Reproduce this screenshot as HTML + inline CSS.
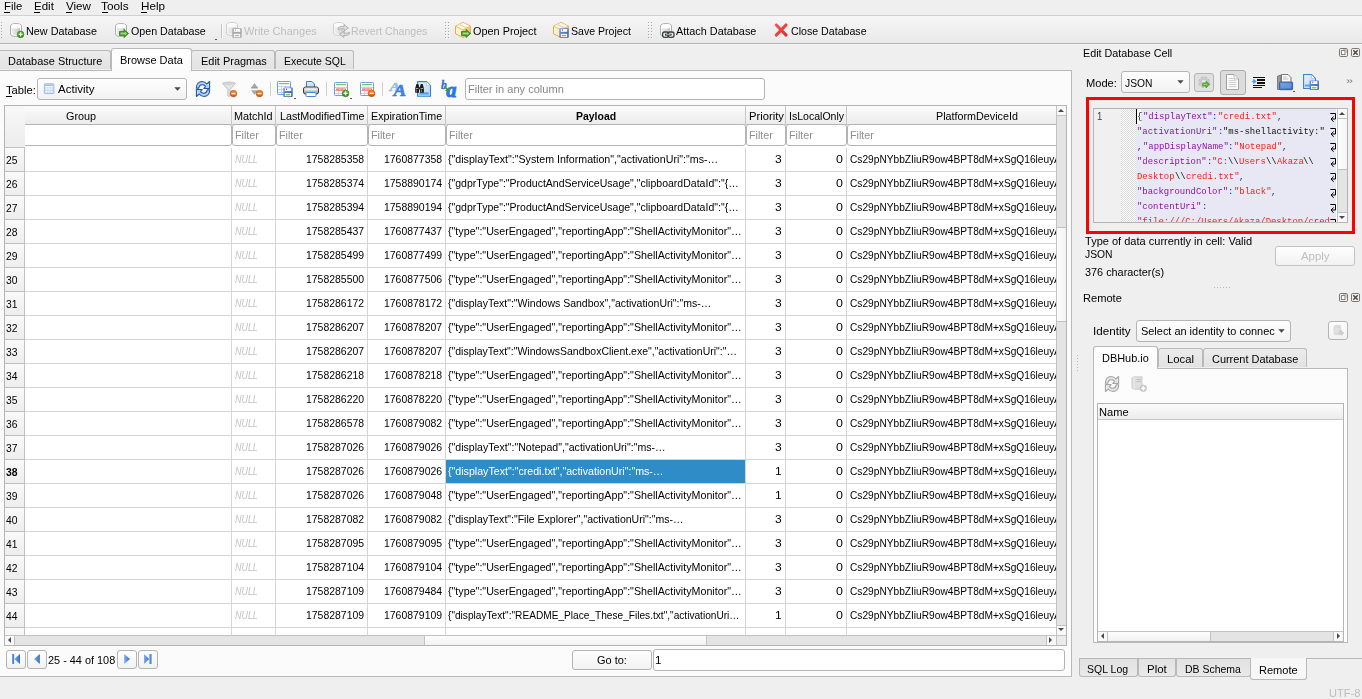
<!DOCTYPE html>
<html><head><meta charset="utf-8"><title>DB Browser for SQLite</title>
<style>
html,body{margin:0;padding:0}
body{width:1362px;height:699px;overflow:hidden;background:#efefef;position:relative;font-family:"Liberation Sans",sans-serif;font-size:11px;color:#000}
div,span.t,svg{position:absolute;box-sizing:border-box}
span.t{white-space:pre;line-height:16px;transform-origin:0 50%}
u{text-decoration:underline;text-underline-offset:2px;text-decoration-thickness:1px}
.btn{border:1px solid #b4b4b4;border-radius:3px;background:linear-gradient(#fefefe,#f2f2f2)}
.inp{border:1px solid #b4b4b4;border-radius:3px;background:#fff}
.hdr{background:linear-gradient(#fbfbfb,#ececec);border-right:1px solid #c6c6c6;border-bottom:1px solid #c6c6c6}
.tab{border:1px solid #b9b9b9;border-bottom:none;border-radius:3px 3px 0 0;background:linear-gradient(#ebebeb,#e2e2e2)}
.tabsel{border:1px solid #b9b9b9;border-bottom:none;border-radius:3px 3px 0 0;background:linear-gradient(#ffffff,#fbfbfb)}
.btab{border:1px solid #b9b9b9;border-top:none;border-radius:0 0 3px 3px;background:linear-gradient(#e1e1e1,#e9e9e9)}
.btabsel{border:1px solid #b9b9b9;border-top:none;border-radius:0 0 3px 3px;background:#f7f7f7}
.sep{background:#c4c4c4;width:1px}
#txt{left:0;top:0;width:1362px;height:699px;will-change:transform}

</style></head>
<body>
<svg width="0" height="0" style="left:0;top:0"><defs>
<linearGradient id="gCyl" x1="0" x2="1" y1="0" y2="0"><stop offset="0" stop-color="#ededed"/><stop offset=".5" stop-color="#dcdcdc"/><stop offset="1" stop-color="#c4c4c4"/></linearGradient>
<linearGradient id="gGreen" x1="0" x2="0" y1="0" y2="1"><stop offset="0" stop-color="#6db64a"/><stop offset="1" stop-color="#2f8a14"/></linearGradient>
<linearGradient id="gOrange" x1="0" x2="0" y1="0" y2="1"><stop offset="0" stop-color="#f89838"/><stop offset="1" stop-color="#d85000"/></linearGradient>
<linearGradient id="gBlue" x1="0" x2="1" y1="0" y2="1"><stop offset="0" stop-color="#6f9fe0"/><stop offset="1" stop-color="#2c5cab"/></linearGradient>
<linearGradient id="gRed" x1="0" x2="1" y1="0" y2="1"><stop offset="0" stop-color="#f86868"/><stop offset="1" stop-color="#e01818"/></linearGradient>
<linearGradient id="gPkgL" x1="0" x2="1" y1="0" y2="0"><stop offset="0" stop-color="#fff6d8"/><stop offset="1" stop-color="#f8dc98"/></linearGradient>
<linearGradient id="gPkgR" x1="0" x2="1" y1="0" y2="1"><stop offset="0" stop-color="#fbe3a0"/><stop offset="1" stop-color="#f0b040"/></linearGradient>
<linearGradient id="gNav" x1="0" x2="1" y1="0" y2="0"><stop offset="0" stop-color="#82b0f4"/><stop offset="1" stop-color="#2f6ad0"/></linearGradient>
<linearGradient id="gPrn" x1="0" x2="0" y1="0" y2="1"><stop offset="0" stop-color="#f4f4f4"/><stop offset="1" stop-color="#9a9a9a"/></linearGradient>
<linearGradient id="gPage" x1="0" x2="1" y1="0" y2="1"><stop offset="0" stop-color="#eaf3ff"/><stop offset="1" stop-color="#b8d4f8"/></linearGradient>
</defs></svg><div style="left:0px;top:0px;width:1362px;height:15px;background:#efefef"></div><div style="left:4px;top:12px;width:6px;height:1px;background:#000"></div><div style="left:34px;top:12px;width:6px;height:1px;background:#000"></div><div style="left:66px;top:12px;width:6px;height:1px;background:#000"></div><div style="left:102px;top:12px;width:6px;height:1px;background:#000"></div><div style="left:141px;top:12px;width:6px;height:1px;background:#000"></div><div style="left:0px;top:15px;width:1362px;height:1px;background:#d0d0d0"></div><div style="left:0px;top:16px;width:1362px;height:27px;background:linear-gradient(#f6f6f6,#e9e9e9)"></div><div style="left:0px;top:43px;width:1362px;height:1px;background:#b2b2b2"></div><div style="left:0px;top:44px;width:1362px;height:1px;background:#f6f6f6"></div><div style="left:1px;top:22px;width:1px;height:16px;background:repeating-linear-gradient(#a8a8a8 0 1px,transparent 1px 3px)"></div><div style="left:445px;top:22px;width:1px;height:16px;background:repeating-linear-gradient(#a8a8a8 0 1px,transparent 1px 3px)"></div><div style="left:446px;top:23px;width:1px;height:16px;background:repeating-linear-gradient(#fff 0 1px,transparent 1px 3px)"></div><div style="left:448px;top:22px;width:1px;height:16px;background:repeating-linear-gradient(#a8a8a8 0 1px,transparent 1px 3px)"></div><div style="left:449px;top:23px;width:1px;height:16px;background:repeating-linear-gradient(#fff 0 1px,transparent 1px 3px)"></div><div style="left:648px;top:22px;width:1px;height:16px;background:repeating-linear-gradient(#a8a8a8 0 1px,transparent 1px 3px)"></div><div style="left:649px;top:23px;width:1px;height:16px;background:repeating-linear-gradient(#fff 0 1px,transparent 1px 3px)"></div><div style="left:651px;top:22px;width:1px;height:16px;background:repeating-linear-gradient(#a8a8a8 0 1px,transparent 1px 3px)"></div><div style="left:652px;top:23px;width:1px;height:16px;background:repeating-linear-gradient(#fff 0 1px,transparent 1px 3px)"></div><div style="left:221px;top:24px;width:1px;height:14px;background:#c4c4c4"></div><div style="left:222px;top:24px;width:1px;height:14px;background:#fbfbfb"></div><div style="left:215px;top:39px;width:2px;height:1px;background:#555"></div><svg style="left:9px;top:22px;overflow:visible" width="16" height="16" viewBox="0 0 16 16"><g transform="translate(1 1)" opacity="1"><path d="M.5 3C.5 -.3 11.5 -.3 11.5 3V11C11.5 14.3 .5 14.3 .5 11Z" fill="#fbfbfb" stroke="#b0b0b0"/><path d="M1.9 4.6C3.5 6 8.5 6 10.1 4.6V10.6C8.5 12.4 3.5 12.4 1.9 10.6Z" fill="url(#gCyl)"/><ellipse cx="6" cy="3" rx="4.6" ry="1.9" fill="#fff"/></g><circle cx="11.6" cy="12.4" r="3.3" fill="url(#gGreen)" stroke="#2c7a12" stroke-width=".6"/><path d="M9.6 12.4h4" stroke="#fff" stroke-width="1.3"/><path d="M11.6 10.4v4" stroke="#fff" stroke-width="1.3"/></svg><svg style="left:114px;top:22px;overflow:visible" width="16" height="16" viewBox="0 0 16 16"><g transform="translate(1 1)" opacity="1"><path d="M.5 3C.5 -.3 11.5 -.3 11.5 3V11C11.5 14.3 .5 14.3 .5 11Z" fill="#fbfbfb" stroke="#b0b0b0"/><path d="M1.9 4.6C3.5 6 8.5 6 10.1 4.6V10.6C8.5 12.4 3.5 12.4 1.9 10.6Z" fill="url(#gCyl)"/><ellipse cx="6" cy="3" rx="4.6" ry="1.9" fill="#fff"/></g><path transform="translate(5 7)" d="M.5 2.5H5V.4L9.6 4.5L5 8.6V6.5H.5Z" fill="#3b9a1e" stroke="#2a8410" stroke-width=".8" stroke-linejoin="round"/><path transform="translate(5 7)" d="M1.5 3.5H6V2.5L8.1 4.5L6 6.5V5.5H1.5Z" fill="#9ed488"/></svg><svg style="left:226px;top:22px;overflow:visible" width="16" height="16" viewBox="0 0 16 16"><g opacity=".75"><g transform="translate(0 0)" opacity="1"><path d="M.5 3C.5 -.3 11.5 -.3 11.5 3V11C11.5 14.3 .5 14.3 .5 11Z" fill="#fbfbfb" stroke="#c4c4c4"/><path d="M1.9 4.6C3.5 6 8.5 6 10.1 4.6V10.6C8.5 12.4 3.5 12.4 1.9 10.6Z" fill="url(#gCyl)"/><ellipse cx="6" cy="3" rx="4.6" ry="1.9" fill="#fff"/></g></g><g transform="translate(6 6)"><rect x=".3" y=".3" width="9.4" height="9.4" rx=".8" fill="#a8a8a8"/><rect x="1.8" y="1" width="6.4" height="2.8" fill="#fff"/><rect x="3" y="1.4" width="1" height="1.4" fill="#a4a4a4"/><rect x="1.8" y="5.8" width="6.4" height="3.2" fill="#fff"/><rect x="2.8" y="6.9" width="4.4" height="1.3" fill="#b0b0b0"/></g></svg><svg style="left:333px;top:22px;overflow:visible" width="16" height="16" viewBox="0 0 16 16"><g opacity=".75"><g transform="translate(0 0)" opacity="1"><path d="M.5 3C.5 -.3 11.5 -.3 11.5 3V11C11.5 14.3 .5 14.3 .5 11Z" fill="#fbfbfb" stroke="#c4c4c4"/><path d="M1.9 4.6C3.5 6 8.5 6 10.1 4.6V10.6C8.5 12.4 3.5 12.4 1.9 10.6Z" fill="url(#gCyl)"/><ellipse cx="6" cy="3" rx="4.6" ry="1.9" fill="#fff"/></g></g><path d="M5.4 5.4C7.4 4.2 9.4 4.1 11 4.6V2.4L15.4 6L11 8.8V7C9.4 6.5 7.4 6.6 5.4 7.8Z" fill="#dcdcdc" stroke="#a4a4a4" stroke-width=".8" stroke-linejoin="round"/><path d="M16.4 12.2C14.4 13.6 12.4 13.7 10.9 13.2V15.6L6.4 12L10.9 9.2V11C12.4 11.5 14.4 11.4 16.4 10.2Z" fill="#dcdcdc" stroke="#a4a4a4" stroke-width=".8" stroke-linejoin="round"/></svg><svg style="left:455px;top:22px;overflow:visible" width="16" height="16" viewBox="0 0 16 16"><path d="M8 .5L15.5 4.2V11.8L8 15.5L.5 11.8V4.2Z" fill="url(#gPkgL)" stroke="#dfae4c" stroke-width="1" stroke-linejoin="round"/><path d="M8 7.8L15.2 4.4V11.6L8 15.2Z" fill="url(#gPkgR)"/><path d="M8 .8L15 4.2L8 7.6L1 4.2Z" fill="#fffaf0"/><path d="M.8 4.3L8 7.8L15.2 4.3M8 7.8V15.2" fill="none" stroke="#e6bc68" stroke-width=".9"/><path d="M4.5 2.5L11.5 6" stroke="#f0d090" stroke-width="1.2"/><path transform="translate(6 7)" d="M.5 2.5H5V.4L9.6 4.5L5 8.6V6.5H.5Z" fill="#3b9a1e" stroke="#2a8410" stroke-width=".8" stroke-linejoin="round"/><path transform="translate(6 7)" d="M1.5 3.5H6V2.5L8.1 4.5L6 6.5V5.5H1.5Z" fill="#9ed488"/></svg><svg style="left:553px;top:22px;overflow:visible" width="16" height="16" viewBox="0 0 16 16"><path d="M8 .5L15.5 4.2V11.8L8 15.5L.5 11.8V4.2Z" fill="url(#gPkgL)" stroke="#dfae4c" stroke-width="1" stroke-linejoin="round"/><path d="M8 7.8L15.2 4.4V11.6L8 15.2Z" fill="url(#gPkgR)"/><path d="M8 .8L15 4.2L8 7.6L1 4.2Z" fill="#fffaf0"/><path d="M.8 4.3L8 7.8L15.2 4.3M8 7.8V15.2" fill="none" stroke="#e6bc68" stroke-width=".9"/><path d="M4.5 2.5L11.5 6" stroke="#f0d090" stroke-width="1.2"/><g transform="translate(6 6)"><rect x=".3" y=".3" width="9.4" height="9.4" rx=".8" fill="url(#gBlue)"/><rect x="1.8" y="1" width="6.4" height="2.8" fill="#fff"/><rect x="3" y="1.4" width="1" height="1.4" fill="#3a6cc0"/><rect x="1.8" y="5.8" width="6.4" height="3.2" fill="#fff"/><rect x="2.8" y="6.9" width="4.4" height="1.3" fill="#78c030"/></g></svg><svg style="left:659px;top:22px;overflow:visible" width="16" height="16" viewBox="0 0 16 16"><g transform="translate(1 1)" opacity="1"><path d="M.5 3C.5 -.3 11.5 -.3 11.5 3V11C11.5 14.3 .5 14.3 .5 11Z" fill="#fbfbfb" stroke="#b0b0b0"/><path d="M1.9 4.6C3.5 6 8.5 6 10.1 4.6V10.6C8.5 12.4 3.5 12.4 1.9 10.6Z" fill="url(#gCyl)"/><ellipse cx="6" cy="3" rx="4.6" ry="1.9" fill="#fff"/></g><rect x="3.6" y="10" width="6" height="5.3" rx="2" fill="#e8eef0" stroke="#3c3c3c" stroke-width="1.3"/><rect x="9" y="10" width="6" height="5.3" rx="2" fill="#e8eef0" stroke="#3c3c3c" stroke-width="1.3"/><rect x="6" y="11.7" width="6.6" height="1.9" fill="#2c2c2c"/><rect x="7" y="12.3" width="4.6" height=".7" fill="#d8d8d8"/></svg><svg style="left:773px;top:22px;overflow:visible" width="16" height="16" viewBox="0 0 16 16"><path d="M3.3 3L13 13M13 3L3.3 13" stroke="url(#gRed)" stroke-width="3.1" stroke-linecap="round"/><path d="M3.3 3L13 13M13 3L3.3 13" stroke="#f23c3c" stroke-width="2.2" stroke-linecap="round" opacity=".55"/></svg><div style="left:0px;top:70px;width:1072px;height:607px;background:#fbfbfb;border:1px solid #b9b9b9;border-left:none"></div><div class="tab" style="border-left:none;border-radius:0 3px 0 0;left:0px;top:50px;width:111px;height:19px;"></div><div class="tab" style="left:191px;top:50px;width:84px;height:19px;"></div><div class="tab" style="left:275px;top:50px;width:79px;height:19px;"></div><div class="tabsel" style="left:111px;top:48px;width:81px;height:23px;"></div><div style="left:6px;top:96px;width:6px;height:1px;background:#000"></div><div class="btn" style="left:37px;top:78px;width:150px;height:22px;"></div><svg style="left:43px;top:81px;overflow:visible" width="16" height="16" viewBox="0 0 16 16"><rect x="1.3" y="2.8" width="9.6" height="9.8" rx=".8" fill="#cddcf6" stroke="#9dbaea" stroke-width="1"/><rect x="2.3" y="3.9" width="7.6" height=".9" fill="#8ccf7c"/><rect x="2.3" y="5" width="7.6" height="1.3" fill="#eef4fd"/><path d="M2.6 8H4.4M5.2 8H7M7.8 8H9.6M2.6 10.8H4.4M5.2 10.8H7M7.8 10.8H9.6" stroke="#fff" stroke-width="1"/></svg><svg style="left:174px;top:87px" width="7" height="4" viewBox="0 0 7 4"><path d="M.3 .3h6.4L3.5 3.7z" fill="#4a4a4a"/></svg><svg style="left:195px;top:81px;overflow:visible" width="16" height="16" viewBox="0 0 16 16"><g transform="translate(1 0)"><g><path d="M.3 7.3C.3 3 2.8 .5 6 .5C8 .5 9.6 1.4 10.8 3L13.6 .5V7.5H7.8L9.6 5.6C8.8 4.4 7.6 3.8 6.2 3.8C4.4 3.8 3.2 5 2.7 7.3Z" fill="#8fb6e8" stroke="#2458a6" stroke-width="1.1" stroke-linejoin="round"/><path d="M1.6 5.6C2.4 3.2 4 2.1 6.1 2.1C8 2.1 9.6 3 10.6 4.6L12.4 3V6.2H9.6" fill="none" stroke="#e4effc" stroke-width=".9" opacity=".9"/><g transform="rotate(180 7 8)"><path d="M.3 7.3C.3 3 2.8 .5 6 .5C8 .5 9.6 1.4 10.8 3L13.6 .5V7.5H7.8L9.6 5.6C8.8 4.4 7.6 3.8 6.2 3.8C4.4 3.8 3.2 5 2.7 7.3Z" fill="#8fb6e8" stroke="#2458a6" stroke-width="1.1" stroke-linejoin="round"/><path d="M1.6 5.6C2.4 3.2 4 2.1 6.1 2.1C8 2.1 9.6 3 10.6 4.6L12.4 3V6.2H9.6" fill="none" stroke="#e4effc" stroke-width=".9" opacity=".9"/></g></g></g></svg><svg style="left:222px;top:81px;overflow:visible" width="16" height="16" viewBox="0 0 16 16"><path d="M.6 2.6C.6 .6 13.4 .6 13.4 2.6L8.2 8.4V14.6C8.2 15.6 5.8 15.6 5.8 14.6V8.4Z" fill="#e4e4e4" stroke="#b6b6b6" stroke-width=".8"/><ellipse cx="7" cy="2.6" rx="5.6" ry="1.3" fill="#d2d2d2"/><circle cx="11.5" cy="12.6" r="3.3" fill="url(#gOrange)" stroke="#c04800" stroke-width=".6"/><path d="M9.5 12.6h4" stroke="#fff" stroke-width="1.3"/></svg><svg style="left:249px;top:81px;overflow:visible" width="16" height="16" viewBox="0 0 16 16"><path d="M2 7H9L5.5 2Z" fill="#a8a8a8"/><path d="M2 9.2H9L5.5 14Z" fill="#a8a8a8"/><path d="M2 7H9" stroke="#888" stroke-width=".8"/><circle cx="10.5" cy="12.6" r="3.3" fill="url(#gOrange)" stroke="#c04800" stroke-width=".6"/><path d="M8.5 12.6h4" stroke="#fff" stroke-width="1.3"/></svg><svg style="left:277px;top:81px;overflow:visible" width="16" height="16" viewBox="0 0 16 16"><g transform="translate(0 0)"><rect x=".5" y=".5" width="13" height="13" rx=".8" fill="#fff" stroke="#6f9fdf"/><rect x="2" y="2" width="10" height="1.2" fill="#78c070"/><path d="M1 5.5H13M1 8.5H13M1 11.5H13M4.5 4.5V13M8.5 4.5V13" stroke="#b8d0f0" stroke-width=".9" fill="none"/></g><g transform="translate(6 6.2)"><rect x=".3" y=".3" width="9.4" height="9.4" rx=".8" fill="url(#gBlue)"/><rect x="1.8" y="1" width="6.4" height="2.8" fill="#fff"/><rect x="3" y="1.4" width="1" height="1.4" fill="#3a6cc0"/><rect x="1.8" y="5.8" width="6.4" height="3.2" fill="#fff"/><rect x="2.8" y="6.9" width="4.4" height="1.3" fill="#78c030"/></g></svg><svg style="left:303px;top:81px;overflow:visible" width="16" height="16" viewBox="0 0 16 16"><path d="M3.5 6.5V.5H9L11.5 3V6.5Z" fill="url(#gPage)" stroke="#3f7fd0" stroke-width="1"/><rect x=".5" y="6" width="15" height="7" rx="2" fill="url(#gPrn)" stroke="#3a3a3a" stroke-width="1"/><rect x="2.5" y="7.5" width="11" height="2" rx="1" fill="#e8e8e8"/><rect x="3" y="11.5" width="10" height="4" rx=".8" fill="#fff" stroke="#4a86d4" stroke-width="1"/></svg><svg style="left:334px;top:81px;overflow:visible" width="16" height="16" viewBox="0 0 16 16"><g transform="translate(0 1)"><rect x=".5" y=".5" width="13" height="13" rx=".8" fill="#fff" stroke="#6f9fdf"/><rect x="2" y="2" width="10" height="1.2" fill="#78c070"/><path d="M1 5.5H13M1 8.5H13M1 11.5H13M4.5 4.5V13M8.5 4.5V13" stroke="#b8d0f0" stroke-width=".9" fill="none"/><rect x="2" y="6.3" width="10" height="2.6" fill="#ff8888"/><path d="M5 7.6h2M9 7.6h2" stroke="#ffc8c8" stroke-width=".8"/></g><circle cx="11.6" cy="12.4" r="3.3" fill="url(#gGreen)" stroke="#2c7a12" stroke-width=".6"/><path d="M9.6 12.4h4" stroke="#fff" stroke-width="1.3"/><path d="M11.6 10.4v4" stroke="#fff" stroke-width="1.3"/></svg><svg style="left:360px;top:81px;overflow:visible" width="16" height="16" viewBox="0 0 16 16"><g transform="translate(0 1)"><rect x=".5" y=".5" width="13" height="13" rx=".8" fill="#fff" stroke="#6f9fdf"/><rect x="2" y="2" width="10" height="1.2" fill="#78c070"/><path d="M1 5.5H13M1 8.5H13M1 11.5H13M4.5 4.5V13M8.5 4.5V13" stroke="#b8d0f0" stroke-width=".9" fill="none"/><rect x="2" y="6.3" width="10" height="2.6" fill="#ff8888"/><path d="M5 7.6h2M9 7.6h2" stroke="#ffc8c8" stroke-width=".8"/></g><circle cx="11.6" cy="12.4" r="3.3" fill="url(#gOrange)" stroke="#c04800" stroke-width=".6"/><path d="M9.6 12.4h4" stroke="#fff" stroke-width="1.3"/></svg><svg style="left:389px;top:81px;overflow:visible" width="16" height="16" viewBox="0 0 16 16"><g transform="translate(.5 9.8) scale(1.2 1)"><text x="0" y="0" font-family="Liberation Serif,serif" font-weight="bold" font-style="italic" font-size="13.2" fill="#8cc0f2" stroke="#8cc0f2" stroke-width=".5">A</text></g><g transform="translate(4.5 15.1) scale(1.12 1)"><text x="0" y="0" font-family="Liberation Serif,serif" font-weight="bold" font-style="italic" font-size="17" fill="#3f7fe4" stroke="#3f7fe4" stroke-width=".6">A</text></g></svg><svg style="left:415px;top:81px;overflow:visible" width="16" height="16" viewBox="0 0 16 16"><path d="M2.6 .6H11.5L15.5 4.6V15.2H2.6Z" fill="url(#gPage)" stroke="#3f7fd0" stroke-width="1.1" stroke-linejoin="round"/><path d="M11.5 .8V4.6H15.2" fill="#fff" stroke="#9cc0f0" stroke-width=".7"/><rect x="4.2" y="11.3" width="9.5" height="2.3" fill="#48a8f0"/><path d="M.2 11.8V7.2L1.4 3H3.4L4.2 6.3H4.9L5.7 3H7.7L8.9 7.2V11.8H5.1V8.6H4V11.8Z" fill="#1c1c1c"/><rect x=".8" y="7.2" width="2.6" height=".8" fill="#ccc"/><rect x="5.6" y="7.2" width="2.6" height=".8" fill="#ccc"/><rect x="1.2" y="8.6" width=".8" height="2.4" fill="#888"/><rect x="6" y="8.6" width=".8" height="2.4" fill="#888"/></svg><svg style="left:441px;top:81px;overflow:visible" width="16" height="16" viewBox="0 0 16 16"><text x="0" y="7.9" font-family="Liberation Serif,serif" font-weight="bold" font-style="italic" font-size="11.6" fill="#2f70e0" stroke="#2f70e0" stroke-width=".3">b</text><text x="5.2" y="15.6" font-family="Liberation Serif,serif" font-weight="bold" font-style="italic" font-size="20.5" fill="#2f74e4" stroke="#2f74e4" stroke-width=".8">a</text><path d="M4 4.8L6.6 7.4L8 6V10H4L5.4 8.6L2.8 6Z" fill="#3c9a2c"/></svg><div style="left:270px;top:82px;width:1px;height:14px;background:#cfcfcf"></div><div style="left:326px;top:82px;width:1px;height:14px;background:#cfcfcf"></div><div style="left:382px;top:82px;width:1px;height:14px;background:#cfcfcf"></div><div style="left:294px;top:98px;width:2px;height:1px;background:#555"></div><div style="left:350px;top:98px;width:2px;height:1px;background:#555"></div><div class="inp" style="left:465px;top:78px;width:300px;height:22px;"></div><div style="left:4px;top:105px;width:1063px;height:541px;background:#fff;border:1px solid #b4b4b4"></div><div style="left:5px;top:106px;width:1051px;height:529px;overflow:hidden"><div class="hdr" style="left:-72px;top:0px;width:299px;height:19px;"></div><div style="left:-72px;top:18px;width:299px;height:22px;background:#fff;border:1px solid #b4b4b4;border-radius:3px"></div><div class="hdr" style="left:227px;top:0px;width:44px;height:19px;"></div><div style="left:227px;top:18px;width:44px;height:22px;background:#fff;border:1px solid #b4b4b4;border-radius:3px"></div><div class="hdr" style="left:271px;top:0px;width:92px;height:19px;"></div><div style="left:271px;top:18px;width:92px;height:22px;background:#fff;border:1px solid #b4b4b4;border-radius:3px"></div><div class="hdr" style="left:363px;top:0px;width:78px;height:19px;"></div><div style="left:363px;top:18px;width:78px;height:22px;background:#fff;border:1px solid #b4b4b4;border-radius:3px"></div><div class="hdr" style="left:441px;top:0px;width:300px;height:19px;"></div><div style="left:441px;top:18px;width:300px;height:22px;background:#fff;border:1px solid #b4b4b4;border-radius:3px"></div><div class="hdr" style="left:741px;top:0px;width:40px;height:19px;"></div><div style="left:741px;top:18px;width:40px;height:22px;background:#fff;border:1px solid #b4b4b4;border-radius:3px"></div><div class="hdr" style="left:781px;top:0px;width:61px;height:19px;"></div><div style="left:781px;top:18px;width:61px;height:22px;background:#fff;border:1px solid #b4b4b4;border-radius:3px"></div><div class="hdr" style="left:842px;top:0px;width:261px;height:19px;"></div><div style="left:842px;top:18px;width:261px;height:22px;background:#fff;border:1px solid #b4b4b4;border-radius:3px"></div><div style="left:0px;top:0px;width:20px;height:41px;background:linear-gradient(#f8f8f8,#ececec)"></div><div style="left:0px;top:41px;width:20px;height:1px;background:#c0c0c0"></div><div style="left:226px;top:42px;width:1px;height:487px;background:#d4d4d4"></div><div style="left:270px;top:42px;width:1px;height:487px;background:#d4d4d4"></div><div style="left:362px;top:42px;width:1px;height:487px;background:#d4d4d4"></div><div style="left:440px;top:42px;width:1px;height:487px;background:#d4d4d4"></div><div style="left:740px;top:42px;width:1px;height:487px;background:#d4d4d4"></div><div style="left:780px;top:42px;width:1px;height:487px;background:#d4d4d4"></div><div style="left:841px;top:42px;width:1px;height:487px;background:#d4d4d4"></div><div style="left:0px;top:42px;width:20px;height:24px;background:linear-gradient(#f9f9f9,#ededed);border-right:1px solid #c0c0c0;border-bottom:1px solid #c0c0c0"></div><div style="left:20px;top:65px;width:1031px;height:1px;background:#d4d4d4"></div><div style="left:0px;top:66px;width:20px;height:24px;background:linear-gradient(#f9f9f9,#ededed);border-right:1px solid #c0c0c0;border-bottom:1px solid #c0c0c0"></div><div style="left:20px;top:89px;width:1031px;height:1px;background:#d4d4d4"></div><div style="left:0px;top:90px;width:20px;height:24px;background:linear-gradient(#f9f9f9,#ededed);border-right:1px solid #c0c0c0;border-bottom:1px solid #c0c0c0"></div><div style="left:20px;top:113px;width:1031px;height:1px;background:#d4d4d4"></div><div style="left:0px;top:114px;width:20px;height:24px;background:linear-gradient(#f9f9f9,#ededed);border-right:1px solid #c0c0c0;border-bottom:1px solid #c0c0c0"></div><div style="left:20px;top:137px;width:1031px;height:1px;background:#d4d4d4"></div><div style="left:0px;top:138px;width:20px;height:24px;background:linear-gradient(#f9f9f9,#ededed);border-right:1px solid #c0c0c0;border-bottom:1px solid #c0c0c0"></div><div style="left:20px;top:161px;width:1031px;height:1px;background:#d4d4d4"></div><div style="left:0px;top:162px;width:20px;height:24px;background:linear-gradient(#f9f9f9,#ededed);border-right:1px solid #c0c0c0;border-bottom:1px solid #c0c0c0"></div><div style="left:20px;top:185px;width:1031px;height:1px;background:#d4d4d4"></div><div style="left:0px;top:186px;width:20px;height:24px;background:linear-gradient(#f9f9f9,#ededed);border-right:1px solid #c0c0c0;border-bottom:1px solid #c0c0c0"></div><div style="left:20px;top:209px;width:1031px;height:1px;background:#d4d4d4"></div><div style="left:0px;top:210px;width:20px;height:24px;background:linear-gradient(#f9f9f9,#ededed);border-right:1px solid #c0c0c0;border-bottom:1px solid #c0c0c0"></div><div style="left:20px;top:233px;width:1031px;height:1px;background:#d4d4d4"></div><div style="left:0px;top:234px;width:20px;height:24px;background:linear-gradient(#f9f9f9,#ededed);border-right:1px solid #c0c0c0;border-bottom:1px solid #c0c0c0"></div><div style="left:20px;top:257px;width:1031px;height:1px;background:#d4d4d4"></div><div style="left:0px;top:258px;width:20px;height:24px;background:linear-gradient(#f9f9f9,#ededed);border-right:1px solid #c0c0c0;border-bottom:1px solid #c0c0c0"></div><div style="left:20px;top:281px;width:1031px;height:1px;background:#d4d4d4"></div><div style="left:0px;top:282px;width:20px;height:24px;background:linear-gradient(#f9f9f9,#ededed);border-right:1px solid #c0c0c0;border-bottom:1px solid #c0c0c0"></div><div style="left:20px;top:305px;width:1031px;height:1px;background:#d4d4d4"></div><div style="left:0px;top:306px;width:20px;height:24px;background:linear-gradient(#f9f9f9,#ededed);border-right:1px solid #c0c0c0;border-bottom:1px solid #c0c0c0"></div><div style="left:20px;top:329px;width:1031px;height:1px;background:#d4d4d4"></div><div style="left:0px;top:330px;width:20px;height:24px;background:linear-gradient(#f9f9f9,#ededed);border-right:1px solid #c0c0c0;border-bottom:1px solid #c0c0c0"></div><div style="left:20px;top:353px;width:1031px;height:1px;background:#d4d4d4"></div><div style="left:0px;top:354px;width:20px;height:24px;background:linear-gradient(#f9f9f9,#ededed);border-right:1px solid #c0c0c0;border-bottom:1px solid #c0c0c0"></div><div style="left:20px;top:377px;width:1031px;height:1px;background:#d4d4d4"></div><div style="left:441px;top:354px;width:299px;height:23px;background:#308cc6"></div><div style="left:0px;top:378px;width:20px;height:24px;background:linear-gradient(#f9f9f9,#ededed);border-right:1px solid #c0c0c0;border-bottom:1px solid #c0c0c0"></div><div style="left:20px;top:401px;width:1031px;height:1px;background:#d4d4d4"></div><div style="left:0px;top:402px;width:20px;height:24px;background:linear-gradient(#f9f9f9,#ededed);border-right:1px solid #c0c0c0;border-bottom:1px solid #c0c0c0"></div><div style="left:20px;top:425px;width:1031px;height:1px;background:#d4d4d4"></div><div style="left:0px;top:426px;width:20px;height:24px;background:linear-gradient(#f9f9f9,#ededed);border-right:1px solid #c0c0c0;border-bottom:1px solid #c0c0c0"></div><div style="left:20px;top:449px;width:1031px;height:1px;background:#d4d4d4"></div><div style="left:0px;top:450px;width:20px;height:24px;background:linear-gradient(#f9f9f9,#ededed);border-right:1px solid #c0c0c0;border-bottom:1px solid #c0c0c0"></div><div style="left:20px;top:473px;width:1031px;height:1px;background:#d4d4d4"></div><div style="left:0px;top:474px;width:20px;height:24px;background:linear-gradient(#f9f9f9,#ededed);border-right:1px solid #c0c0c0;border-bottom:1px solid #c0c0c0"></div><div style="left:20px;top:497px;width:1031px;height:1px;background:#d4d4d4"></div><div style="left:0px;top:498px;width:20px;height:24px;background:linear-gradient(#f9f9f9,#ededed);border-right:1px solid #c0c0c0;border-bottom:1px solid #c0c0c0"></div><div style="left:20px;top:521px;width:1031px;height:1px;background:#d4d4d4"></div><div style="left:0px;top:522px;width:20px;height:24px;background:linear-gradient(#f9f9f9,#ededed);border-right:1px solid #c0c0c0;border-bottom:1px solid #c0c0c0"></div></div><div style="left:1056px;top:106px;width:10px;height:529px;background:#e4e4e4;border-left:1px solid #c2c2c2"></div><div style="left:1056px;top:106px;width:10px;height:10px;background:#f8f8f8;border-left:1px solid #c2c2c2;border-bottom:1px solid #c2c2c2"></div><svg style="left:1058px;top:109px" width="6" height="3" viewBox="0 0 6 3"><path d="M0 3h6L3 0z" fill="#4a4a4a"/></svg><div style="left:1056px;top:625px;width:10px;height:10px;background:#f8f8f8;border-left:1px solid #c2c2c2;border-top:1px solid #c2c2c2"></div><svg style="left:1058px;top:628.4px" width="6" height="3" viewBox="0 0 6 3"><path d="M0 0h6L3 3z" fill="#4a4a4a"/></svg><div style="left:1056px;top:227px;width:10px;height:95px;background:linear-gradient(90deg,#fdfdfd,#f2f2f2);border:1px solid #c2c2c2;border-right:none"></div><div style="left:5px;top:635px;width:1051px;height:10px;background:#e4e4e4;border-top:1px solid #c2c2c2"></div><div style="left:5px;top:635px;width:10px;height:10px;background:#f8f8f8;border-top:1px solid #c2c2c2;border-right:1px solid #c2c2c2"></div><svg style="left:8px;top:637.4px" width="3" height="6" viewBox="0 0 3 6"><path d="M3 0v6L0 3z" fill="#4a4a4a"/></svg><div style="left:1046px;top:635px;width:10px;height:10px;background:#f8f8f8;border-top:1px solid #c2c2c2;border-left:1px solid #c2c2c2"></div><svg style="left:1049px;top:637.4px" width="3" height="6" viewBox="0 0 3 6"><path d="M0 0v6L3 3z" fill="#4a4a4a"/></svg><div style="left:424px;top:635px;width:283px;height:10px;background:linear-gradient(#fdfdfd,#f2f2f2);border:1px solid #c2c2c2;border-bottom:none"></div><div style="left:1056px;top:635px;width:10px;height:10px;background:#ebebeb;border-left:1px solid #c2c2c2;border-top:1px solid #c2c2c2"></div><div class="btn" style="left:6px;top:650px;width:20px;height:19px;"></div><svg style="left:8px;top:651.1px;overflow:visible" width="16" height="16" viewBox="0 0 16 16"><rect x="4" y="3" width="2.1" height="10" fill="url(#gNav)"/><path d="M12 3V13L6.2 8Z" fill="url(#gNav)"/></svg><div class="btn" style="left:27px;top:650px;width:20px;height:19px;"></div><svg style="left:29px;top:651.1px;overflow:visible" width="16" height="16" viewBox="0 0 16 16"><path d="M10.8 3V13L5 8Z" fill="url(#gNav)"/></svg><div class="btn" style="left:117px;top:650px;width:20px;height:19px;"></div><svg style="left:119px;top:651.1px;overflow:visible" width="16" height="16" viewBox="0 0 16 16"><path d="M5.2 3V13L11 8Z" fill="url(#gNav)"/></svg><div class="btn" style="left:138px;top:650px;width:20px;height:19px;"></div><svg style="left:140px;top:651.1px;overflow:visible" width="16" height="16" viewBox="0 0 16 16"><rect x="9.2" y="3" width="2.3" height="10" fill="url(#gNav)"/><path d="M4 3V13L9.2 8Z" fill="url(#gNav)"/></svg><div class="btn" style="left:572px;top:650px;width:80px;height:20px;"></div><div class="inp" style="left:653px;top:649px;width:412px;height:22px;"></div><svg style="left:1339px;top:48px" width="22" height="9" viewBox="0 0 22 9"><rect x=".5" y=".5" width="8" height="8" rx="1.3" fill="#f4f4f4" stroke="#7a7672"/><rect x="2.4" y="2.6" width="3.6" height="4" fill="#fff" stroke="#7a7672" stroke-width=".9"/><path d="M4 1.6H7.2V5" fill="none" stroke="#aaa" stroke-width=".8"/><rect x="12.5" y=".5" width="8" height="8" rx="1.3" fill="#f4f4f4" stroke="#7a7672"/><path d="M14.3 2.3L18.7 6.7M18.7 2.3L14.3 6.7" stroke="#4a4a4a" stroke-width="1.5"/></svg><div class="btn" style="left:1121px;top:71px;width:69px;height:22px;"></div><svg style="left:1177px;top:80px" width="7" height="4" viewBox="0 0 7 4"><path d="M.3 .3h6.4L3.5 3.7z" fill="#4a4a4a"/></svg><div style="left:1194px;top:73px;width:20px;height:19px;border:1px solid #b4b4b4;border-radius:3px;background:#e0e0e0"></div><svg style="left:1196px;top:74px;overflow:visible" width="16" height="16" viewBox="0 0 16 16"><g><circle cx="8" cy="8" r="4.2" fill="none" stroke="#c0c0c0" stroke-width="3.2" stroke-dasharray="2.2 1.1"/><circle cx="8" cy="8" r="3.6" fill="none" stroke="#cacaca" stroke-width="2.4"/><circle cx="8" cy="8" r="2" fill="#e8e8e8"/></g><path d="M6.6 8.9H10V7.1L13.8 10.5L10 13.9V12.1H6.6Z" fill="#5fae40" stroke="#4c9c30" stroke-width=".7" stroke-linejoin="round"/><path d="M7.4 9.9H10.6L11.6 10.5L10.6 11.1H7.4Z" fill="#a0d48c"/></svg><div style="left:1220px;top:70px;width:26px;height:25px;border:1px solid #adadad;border-radius:3px;background:#dcdcdc"></div><svg style="left:1223.8px;top:74px;overflow:visible" width="16" height="16" viewBox="0 0 16 16"><path d="M2.5 .5H10L14.5 5V15.5H2.5Z" fill="#fff" stroke="#a2a2a2" stroke-width="1"/><path d="M10 .8V5H14.2" fill="#f6f6f6" stroke="#b0b0b0" stroke-width=".8"/><path d="M4.6 4.5H9M4.6 6.7H12.4M4.6 8.7H12.4M4.6 10.7H12.4M4.6 12.7H12.4" stroke="#c4c4c4" stroke-width=".9"/></svg><svg style="left:1251px;top:74px;overflow:visible" width="16" height="16" viewBox="0 0 16 16"><g shape-rendering="crispEdges"><rect x="2" y="3" width="12" height="1" fill="#111"/><rect x="6" y="5" width="8" height="2" fill="#111"/><rect x="6" y="8" width="8" height="2" fill="#111"/><rect x="2" y="11" width="12" height="1" fill="#111"/><rect x="2" y="13" width="9" height="1" fill="#111"/></g><path d="M.8 7.5H3.2M2.6 5.4L5.2 7.5L2.6 9.6Z" fill="#4a98f4" stroke="#4a98f4" stroke-width=".9" stroke-linejoin="round"/></svg><svg style="left:1277px;top:74.3px;overflow:visible" width="16" height="16" viewBox="0 0 16 16"><path d="M.5 2.2L3.8 1V15.5H.5Z" fill="#9a9a9a" stroke="#6a6a6a" stroke-width=".8"/><path d="M4.5 .5H11L14 3.5V9H4.5Z" fill="#fafafa" stroke="#6a6a6a" stroke-width=".9"/><path d="M6 3H9.5M6 5H11" stroke="#aaa" stroke-width=".8"/><rect x="2.6" y="8" width="13" height="7.7" rx=".8" fill="url(#gBlue)" stroke="#2a58a8" stroke-width=".9"/><rect x="3.8" y="9.2" width="10.6" height="5.2" fill="#7fa8e8" opacity=".6"/></svg><div style="left:1293px;top:91px;width:2px;height:1px;background:#555"></div><svg style="left:1303px;top:74px;overflow:visible" width="16" height="16" viewBox="0 0 16 16"><path d="M.6 .5H8.5L12.5 4.5V14.5H.6Z" fill="url(#gPage)" stroke="#3f7fd0" stroke-width="1.1" stroke-linejoin="round"/><path d="M8.5 .8V4.5H12.2" fill="#fff" stroke="#9cc0f0" stroke-width=".7"/><rect x="2" y="10.5" width="5" height="2" fill="#48a8f0"/><g transform="translate(6.2 6.2)"><rect x=".3" y=".3" width="9.4" height="9.4" rx=".8" fill="url(#gBlue)"/><rect x="1.8" y="1" width="6.4" height="2.8" fill="#fff"/><rect x="3" y="1.4" width="1" height="1.4" fill="#3a6cc0"/><rect x="1.8" y="5.8" width="6.4" height="3.2" fill="#fff"/><rect x="2.8" y="6.9" width="4.4" height="1.3" fill="#78c030"/></g></svg><div style="left:1086px;top:97px;width:269px;height:137px;border:3px solid #ff0000"></div><div style="left:1093px;top:108px;width:255px;height:115px;border:1px solid #b4b4b4;background:#fff"></div><div style="left:1094px;top:109px;width:243px;height:113px;overflow:hidden"><div style="left:0px;top:0px;width:27px;height:113px;background:#f0f0f0"></div><div style="left:27px;top:0px;width:15px;height:113px;background:conic-gradient(#fff 25%,#d8d8d8 0 50%,#fff 0 75%,#d8d8d8 0) 0 0/2px 2px"></div><div style="left:42px;top:0px;width:200px;height:113px;background:#e8e8f4"></div><div style="left:42px;top:0px;width:5.4px;height:15px;background:#fff"></div><svg style="left:235.7px;top:4.3px;overflow:visible" width="16" height="16" viewBox="0 0 16 16"><path d="M.3 .5H5.5V6H1.3M3.6 3.6L1 6L3.6 8.8" fill="none" stroke="#000" stroke-width="1"/></svg><svg style="left:235.7px;top:19.34px;overflow:visible" width="16" height="16" viewBox="0 0 16 16"><path d="M.3 .5H5.5V6H1.3M3.6 3.6L1 6L3.6 8.8" fill="none" stroke="#000" stroke-width="1"/></svg><svg style="left:235.7px;top:34.38px;overflow:visible" width="16" height="16" viewBox="0 0 16 16"><path d="M.3 .5H5.5V6H1.3M3.6 3.6L1 6L3.6 8.8" fill="none" stroke="#000" stroke-width="1"/></svg><svg style="left:235.7px;top:49.42px;overflow:visible" width="16" height="16" viewBox="0 0 16 16"><path d="M.3 .5H5.5V6H1.3M3.6 3.6L1 6L3.6 8.8" fill="none" stroke="#000" stroke-width="1"/></svg><svg style="left:235.7px;top:64.46px;overflow:visible" width="16" height="16" viewBox="0 0 16 16"><path d="M.3 .5H5.5V6H1.3M3.6 3.6L1 6L3.6 8.8" fill="none" stroke="#000" stroke-width="1"/></svg><svg style="left:235.7px;top:79.5px;overflow:visible" width="16" height="16" viewBox="0 0 16 16"><path d="M.3 .5H5.5V6H1.3M3.6 3.6L1 6L3.6 8.8" fill="none" stroke="#000" stroke-width="1"/></svg><svg style="left:235.7px;top:94.54px;overflow:visible" width="16" height="16" viewBox="0 0 16 16"><path d="M.3 .5H5.5V6H1.3M3.6 3.6L1 6L3.6 8.8" fill="none" stroke="#000" stroke-width="1"/></svg><svg style="left:235.7px;top:109.58px;overflow:visible" width="16" height="16" viewBox="0 0 16 16"><path d="M.3 .5H5.5V6H1.3M3.6 3.6L1 6L3.6 8.8" fill="none" stroke="#000" stroke-width="1"/></svg><div style="left:42px;top:0px;width:1px;height:15px;background:#000"></div></div><div style="left:1337px;top:109px;width:10px;height:113px;background:#e4e4e4;border-left:1px solid #c2c2c2"></div><div style="left:1337px;top:109px;width:10px;height:10px;background:#f8f8f8;border-left:1px solid #c2c2c2;border-bottom:1px solid #c2c2c2"></div><svg style="left:1339.3px;top:111.8px" width="6" height="3" viewBox="0 0 6 3"><path d="M0 3h6L3 0z" fill="#4a4a4a"/></svg><div style="left:1337px;top:212px;width:10px;height:10px;background:#f8f8f8;border-left:1px solid #c2c2c2;border-top:1px solid #c2c2c2"></div><svg style="left:1339.3px;top:215.6px" width="6" height="3" viewBox="0 0 6 3"><path d="M0 0h6L3 3z" fill="#4a4a4a"/></svg><div style="left:1337px;top:118px;width:10px;height:52px;background:linear-gradient(90deg,#fdfdfd,#f4f4f4);border:1px solid #c2c2c2;border-right:none"></div><div class="btn" style="border-color:#c2c2c2;left:1275px;top:246px;width:80px;height:20px;"></div><div style="left:1214px;top:287px;width:17px;height:1px;background:repeating-linear-gradient(90deg,#b8b8b8 0 1px,transparent 1px 3px)"></div><svg style="left:1339px;top:293px" width="22" height="9" viewBox="0 0 22 9"><rect x=".5" y=".5" width="8" height="8" rx="1.3" fill="#f4f4f4" stroke="#7a7672"/><rect x="2.4" y="2.6" width="3.6" height="4" fill="#fff" stroke="#7a7672" stroke-width=".9"/><path d="M4 1.6H7.2V5" fill="none" stroke="#aaa" stroke-width=".8"/><rect x="12.5" y=".5" width="8" height="8" rx="1.3" fill="#f4f4f4" stroke="#7a7672"/><path d="M14.3 2.3L18.7 6.7M18.7 2.3L14.3 6.7" stroke="#4a4a4a" stroke-width="1.5"/></svg><div style="left:1077px;top:355px;width:1px;height:17px;background:repeating-linear-gradient(#b8b8b8 0 1px,transparent 1px 3px)"></div><div class="btn" style="left:1136px;top:320px;width:155px;height:22px;"></div><svg style="left:1278px;top:329px" width="7" height="4" viewBox="0 0 7 4"><path d="M.3 .3h6.4L3.5 3.7z" fill="#4a4a4a"/></svg><div class="btn" style="left:1328px;top:321px;width:20px;height:19px;"></div><svg style="left:1330px;top:322.5px;overflow:visible" width="16" height="16" viewBox="0 0 16 16"><g opacity=".85"><path d="M4 3.2L5.6 2.4H10.6V11.6H5.6L4 10.8Z" fill="#dcdcdc" stroke="#cccccc" stroke-width=".7"/><path d="M7.2 4.5H9.6" stroke="#c4c4c4" stroke-width=".8"/><path d="M8.4 9.2L10.8 6.6L14.2 10L11.6 12.8L10.4 11.4L8.4 11Z" fill="#c6c6c6"/></g></svg><div style="left:1093px;top:368px;width:255px;height:275px;background:#fcfcfc;border:1px solid #b9b9b9"></div><div class="tab" style="left:1158px;top:348px;width:45px;height:19px;"></div><div class="tab" style="left:1203px;top:348px;width:104px;height:19px;"></div><div class="tabsel" style="left:1093px;top:346px;width:65px;height:23px;"></div><svg style="left:1104px;top:376px;overflow:visible" width="16" height="16" viewBox="0 0 16 16"><g transform="translate(1 0)"><g><path d="M.3 7.3C.3 3 2.8 .5 6 .5C8 .5 9.6 1.4 10.8 3L13.6 .5V7.5H7.8L9.6 5.6C8.8 4.4 7.6 3.8 6.2 3.8C4.4 3.8 3.2 5 2.7 7.3Z" fill="#d4d4d4" stroke="#a6a6a6" stroke-width="1.1" stroke-linejoin="round"/><path d="M1.6 5.6C2.4 3.2 4 2.1 6.1 2.1C8 2.1 9.6 3 10.6 4.6L12.4 3V6.2H9.6" fill="none" stroke="#f4f4f4" stroke-width=".9" opacity=".9"/><g transform="rotate(180 7 8)"><path d="M.3 7.3C.3 3 2.8 .5 6 .5C8 .5 9.6 1.4 10.8 3L13.6 .5V7.5H7.8L9.6 5.6C8.8 4.4 7.6 3.8 6.2 3.8C4.4 3.8 3.2 5 2.7 7.3Z" fill="#d4d4d4" stroke="#a6a6a6" stroke-width="1.1" stroke-linejoin="round"/><path d="M1.6 5.6C2.4 3.2 4 2.1 6.1 2.1C8 2.1 9.6 3 10.6 4.6L12.4 3V6.2H9.6" fill="none" stroke="#f4f4f4" stroke-width=".9" opacity=".9"/></g></g></g></svg><svg style="left:1130.5px;top:376px;overflow:visible" width="16" height="16" viewBox="0 0 16 16"><path d="M1 2L3 .8H11V13.2H3L1 12Z" fill="#dedede" stroke="#c6c6c6" stroke-width=".8"/><path d="M5.5 3.5H9.8M5.5 5.5H9.8" stroke="#bdbdbd" stroke-width=".9"/><path d="M3 1V13" stroke="#ececec" stroke-width="1"/><circle cx="12.3" cy="12.3" r="3.2" fill="#d2d2d2" stroke="#b8b8b8" stroke-width=".7"/><path d="M10.3 12.3h4M12.3 10.3v4" stroke="#fff" stroke-width="1.3"/></svg><div style="left:1097px;top:403px;width:247px;height:239px;background:#fff;border:1px solid #b4b4b4"></div><div style="left:1098px;top:404px;width:245px;height:16px;background:linear-gradient(#fbfbfb,#ececec);border-bottom:1px solid #c6c6c6"></div><div style="left:1098px;top:631px;width:245px;height:10px;background:#e4e4e4;border-top:1px solid #c2c2c2"></div><div style="left:1098px;top:631px;width:10px;height:10px;background:#f8f8f8;border-top:1px solid #c2c2c2;border-right:1px solid #c2c2c2"></div><svg style="left:1101px;top:633.4px" width="3" height="6" viewBox="0 0 3 6"><path d="M3 0v6L0 3z" fill="#4a4a4a"/></svg><div style="left:1333px;top:631px;width:10px;height:10px;background:#f8f8f8;border-top:1px solid #c2c2c2;border-left:1px solid #c2c2c2"></div><svg style="left:1337px;top:633.4px" width="3" height="6" viewBox="0 0 3 6"><path d="M0 0v6L3 3z" fill="#4a4a4a"/></svg><div style="left:1107px;top:631px;width:104px;height:10px;background:linear-gradient(#fdfdfd,#f2f2f2);border:1px solid #c2c2c2;border-bottom:none"></div><div class="btab" style="left:1079px;top:658px;width:59px;height:19px;"></div><div class="btab" style="left:1138px;top:658px;width:38px;height:19px;"></div><div class="btab" style="left:1176px;top:658px;width:75px;height:19px;"></div><div style="left:1079px;top:658px;width:283px;height:1px;background:#b9b9b9"></div><div class="btabsel" style="left:1250px;top:658px;width:57px;height:22px;"></div>
<div id="txt"><span id="t0" class="t" style="left:3.7px;top:-1.81px;font-size:11px;color:#000;font-weight:normal;font-style:normal;font-family:'Liberation Sans', sans-serif;transform:scaleX(1.0319);">File</span><span id="t1" class="t" style="left:33.6px;top:-1.81px;font-size:11px;color:#000;font-weight:normal;font-style:normal;font-family:'Liberation Sans', sans-serif;transform:scaleX(1.0491);">Edit</span><span id="t2" class="t" style="left:65.6px;top:-1.81px;font-size:11px;color:#000;font-weight:normal;font-style:normal;font-family:'Liberation Sans', sans-serif;transform:scaleX(1.0526);">View</span><span id="t3" class="t" style="left:101.4px;top:-1.81px;font-size:11px;color:#000;font-weight:normal;font-style:normal;font-family:'Liberation Sans', sans-serif;transform:scaleX(1.0745);">Tools</span><span id="t4" class="t" style="left:140.7px;top:-1.81px;font-size:11px;color:#000;font-weight:normal;font-style:normal;font-family:'Liberation Sans', sans-serif;transform:scaleX(1.0608);">Help</span><span id="t5" class="t" style="left:25.9px;top:23.19px;font-size:11px;color:#000;font-weight:normal;font-style:normal;font-family:'Liberation Sans', sans-serif;transform:scaleX(0.9826);">New Database</span><span id="t6" class="t" style="left:131.2px;top:23.19px;font-size:11px;color:#000;font-weight:normal;font-style:normal;font-family:'Liberation Sans', sans-serif;transform:scaleX(0.9706);">Open Database</span><span id="t7" class="t" style="left:243.7px;top:23.19px;font-size:11px;color:#bebebe;font-weight:normal;font-style:normal;font-family:'Liberation Sans', sans-serif;transform:scaleX(1.0033);">Write Changes</span><span id="t8" class="t" style="left:351.1px;top:23.19px;font-size:11px;color:#bebebe;font-weight:normal;font-style:normal;font-family:'Liberation Sans', sans-serif;transform:scaleX(0.9610);">Revert Changes</span><span id="t9" class="t" style="left:473.1px;top:23.19px;font-size:11px;color:#000;font-weight:normal;font-style:normal;font-family:'Liberation Sans', sans-serif;transform:scaleX(0.9906);">Open Project</span><span id="t10" class="t" style="left:570.6px;top:23.19px;font-size:11px;color:#000;font-weight:normal;font-style:normal;font-family:'Liberation Sans', sans-serif;transform:scaleX(0.9603);">Save Project</span><span id="t11" class="t" style="left:675.6px;top:23.19px;font-size:11px;color:#000;font-weight:normal;font-style:normal;font-family:'Liberation Sans', sans-serif;transform:scaleX(0.9884);">Attach Database</span><span id="t12" class="t" style="left:791.1px;top:23.19px;font-size:11px;color:#000;font-weight:normal;font-style:normal;font-family:'Liberation Sans', sans-serif;transform:scaleX(0.9657);">Close Database</span><span id="t13" class="t" style="left:7.7px;top:52.89px;font-size:11px;color:#000;font-weight:normal;font-style:normal;font-family:'Liberation Sans', sans-serif;transform:scaleX(0.9949);">Database Structure</span><span id="t14" class="t" style="left:119.7px;top:51.89px;font-size:11px;color:#000;font-weight:normal;font-style:normal;font-family:'Liberation Sans', sans-serif;transform:scaleX(0.9971);">Browse Data</span><span id="t15" class="t" style="left:200.7px;top:52.89px;font-size:11px;color:#000;font-weight:normal;font-style:normal;font-family:'Liberation Sans', sans-serif;transform:scaleX(0.9965);">Edit Pragmas</span><span id="t16" class="t" style="left:283.6px;top:52.89px;font-size:11px;color:#000;font-weight:normal;font-style:normal;font-family:'Liberation Sans', sans-serif;transform:scaleX(0.9548);">Execute SQL</span><span id="t17" class="t" style="left:5.6px;top:82.39px;font-size:11px;color:#000;font-weight:normal;font-style:normal;font-family:'Liberation Sans', sans-serif;transform:scaleX(1.0184);">Table:</span><span id="t18" class="t" style="left:57.7px;top:81.49px;font-size:11px;color:#000;font-weight:normal;font-style:normal;font-family:'Liberation Sans', sans-serif;transform:scaleX(1.0475);">Activity</span><span id="t19" class="t" style="left:467.8px;top:81.49px;font-size:11px;color:#868686;font-weight:normal;font-style:normal;font-family:'Liberation Sans', sans-serif;transform:scaleX(1.0045);">Filter in any column</span><span id="t215" class="t" style="left:47.8px;top:651.89px;font-size:11px;color:#000;font-weight:normal;font-style:normal;font-family:'Liberation Sans', sans-serif;transform:scaleX(0.9898);">25 - 44 of 108</span><span id="t216" class="t" style="left:596.8px;top:651.99px;font-size:11px;color:#000;font-weight:normal;font-style:normal;font-family:'Liberation Sans', sans-serif;transform:scaleX(0.9977);">Go to:</span><span id="t217" class="t" style="left:655px;top:651.99px;font-size:11px;color:#000;font-weight:normal;font-style:normal;font-family:'Liberation Sans', sans-serif;transform:scaleX(1.0612);">1</span><span id="t218" class="t" style="left:1082.8px;top:45.49px;font-size:11px;color:#000;font-weight:normal;font-style:normal;font-family:'Liberation Sans', sans-serif;transform:scaleX(0.9790);">Edit Database Cell</span><span id="t219" class="t" style="left:1085.6px;top:75.19px;font-size:11px;color:#000;font-weight:normal;font-style:normal;font-family:'Liberation Sans', sans-serif;transform:scaleX(1.0105);">Mode:</span><span id="t220" class="t" style="left:1125.4px;top:75.19px;font-size:11px;color:#000;font-weight:normal;font-style:normal;font-family:'Liberation Sans', sans-serif;transform:scaleX(0.9338);">JSON</span><span id="t221" class="t" style="left:1346.4px;top:73.21px;font-size:9.5px;color:#777;font-weight:normal;font-style:normal;font-family:'Liberation Sans', sans-serif;transform:scaleX(1.3404);">»</span><span id="t255" class="t" style="left:1085.4px;top:232.99px;font-size:11px;color:#000;font-weight:normal;font-style:normal;font-family:'Liberation Sans', sans-serif;transform:scaleX(1.0023);">Type of data currently in cell: Valid</span><span id="t256" class="t" style="left:1085.4px;top:245.89px;font-size:11px;color:#000;font-weight:normal;font-style:normal;font-family:'Liberation Sans', sans-serif;transform:scaleX(0.9372);">JSON</span><span id="t257" class="t" style="left:1085.4px;top:263.89px;font-size:11px;color:#000;font-weight:normal;font-style:normal;font-family:'Liberation Sans', sans-serif;transform:scaleX(0.9876);">376 character(s)</span><span id="t258" class="t" style="left:1300.6px;top:248.49px;font-size:11px;color:#bebebe;font-weight:normal;font-style:normal;font-family:'Liberation Sans', sans-serif;transform:scaleX(1.0316);">Apply</span><span id="t259" class="t" style="left:1082.6px;top:289.89px;font-size:11px;color:#000;font-weight:normal;font-style:normal;font-family:'Liberation Sans', sans-serif;transform:scaleX(1.0096);">Remote</span><span id="t260" class="t" style="left:1092.9px;top:322.99px;font-size:11px;color:#000;font-weight:normal;font-style:normal;font-family:'Liberation Sans', sans-serif;transform:scaleX(1.0601);">Identity</span><span id="t261" class="t" style="left:1140.6px;top:322.99px;font-size:11px;color:#000;font-weight:normal;font-style:normal;font-family:'Liberation Sans', sans-serif;transform:scaleX(0.9938);">Select an identity to connec</span><span id="t262" class="t" style="left:1101.9px;top:349.69px;font-size:11px;color:#000;font-weight:normal;font-style:normal;font-family:'Liberation Sans', sans-serif;transform:scaleX(0.9941);">DBHub.io</span><span id="t263" class="t" style="left:1166.9px;top:350.99px;font-size:11px;color:#000;font-weight:normal;font-style:normal;font-family:'Liberation Sans', sans-serif;transform:scaleX(1.0229);">Local</span><span id="t264" class="t" style="left:1211.6px;top:350.99px;font-size:11px;color:#000;font-weight:normal;font-style:normal;font-family:'Liberation Sans', sans-serif;transform:scaleX(0.9939);">Current Database</span><span id="t265" class="t" style="left:1098.9px;top:403.99px;font-size:11px;color:#000;font-weight:normal;font-style:normal;font-family:'Liberation Sans', sans-serif;transform:scaleX(1.0087);">Name</span><span id="t266" class="t" style="left:1087.4px;top:660.99px;font-size:11px;color:#000;font-weight:normal;font-style:normal;font-family:'Liberation Sans', sans-serif;transform:scaleX(0.9555);">SQL Log</span><span id="t267" class="t" style="left:1146.9px;top:660.99px;font-size:11px;color:#000;font-weight:normal;font-style:normal;font-family:'Liberation Sans', sans-serif;transform:scaleX(1.0438);">Plot</span><span id="t268" class="t" style="left:1184.7px;top:660.99px;font-size:11px;color:#000;font-weight:normal;font-style:normal;font-family:'Liberation Sans', sans-serif;transform:scaleX(0.9505);">DB Schema</span><span id="t269" class="t" style="left:1259px;top:661.69px;font-size:11px;color:#000;font-weight:normal;font-style:normal;font-family:'Liberation Sans', sans-serif;transform:scaleX(1.0044);">Remote</span><span id="t270" class="t" style="left:1328.6px;top:684.79px;font-size:11px;color:#bdbdbd;font-weight:normal;font-style:normal;font-family:'Liberation Sans', sans-serif;transform:scaleX(1.0041);">UTF-8</span><div style="left:5px;top:106px;width:1051px;height:529px;overflow:hidden"><span id="t20" class="t" style="left:61.4px;top:2.19px;font-size:11px;color:#000;font-weight:normal;font-style:normal;font-family:'Liberation Sans', sans-serif;transform:scaleX(0.9844);">Group</span><span id="t21" class="t" style="left:228.9px;top:2.19px;font-size:11px;color:#000;font-weight:normal;font-style:normal;font-family:'Liberation Sans', sans-serif;transform:scaleX(0.9862);">MatchId</span><span id="t22" class="t" style="left:230.4px;top:21.39px;font-size:11px;color:#8e8e8e;font-weight:normal;font-style:normal;font-family:'Liberation Sans', sans-serif;transform:scaleX(0.9774);">Filter</span><span id="t23" class="t" style="left:274.7px;top:2.19px;font-size:11px;color:#000;font-weight:normal;font-style:normal;font-family:'Liberation Sans', sans-serif;transform:scaleX(0.9779);">LastModifiedTime</span><span id="t24" class="t" style="left:274.4px;top:21.39px;font-size:11px;color:#8e8e8e;font-weight:normal;font-style:normal;font-family:'Liberation Sans', sans-serif;transform:scaleX(0.9774);">Filter</span><span id="t25" class="t" style="left:365.9px;top:2.19px;font-size:11px;color:#000;font-weight:normal;font-style:normal;font-family:'Liberation Sans', sans-serif;transform:scaleX(0.9746);">ExpirationTime</span><span id="t26" class="t" style="left:366.4px;top:21.39px;font-size:11px;color:#8e8e8e;font-weight:normal;font-style:normal;font-family:'Liberation Sans', sans-serif;transform:scaleX(0.9774);">Filter</span><span id="t27" class="t" style="left:570.7px;top:2.19px;font-size:11px;color:#000;font-weight:bold;font-style:normal;font-family:'Liberation Sans', sans-serif;transform:scaleX(0.9505);">Payload</span><span id="t28" class="t" style="left:444.4px;top:21.39px;font-size:11px;color:#8e8e8e;font-weight:normal;font-style:normal;font-family:'Liberation Sans', sans-serif;transform:scaleX(0.9774);">Filter</span><span id="t29" class="t" style="left:743.6px;top:2.19px;font-size:11px;color:#000;font-weight:normal;font-style:normal;font-family:'Liberation Sans', sans-serif;transform:scaleX(1.0194);">Priority</span><span id="t30" class="t" style="left:744.4px;top:21.39px;font-size:11px;color:#8e8e8e;font-weight:normal;font-style:normal;font-family:'Liberation Sans', sans-serif;transform:scaleX(0.9774);">Filter</span><span id="t31" class="t" style="left:783.6px;top:2.19px;font-size:11px;color:#000;font-weight:normal;font-style:normal;font-family:'Liberation Sans', sans-serif;transform:scaleX(0.9585);">IsLocalOnly</span><span id="t32" class="t" style="left:784.4px;top:21.39px;font-size:11px;color:#8e8e8e;font-weight:normal;font-style:normal;font-family:'Liberation Sans', sans-serif;transform:scaleX(0.9774);">Filter</span><span id="t33" class="t" style="left:931.1px;top:2.19px;font-size:11px;color:#000;font-weight:normal;font-style:normal;font-family:'Liberation Sans', sans-serif;transform:scaleX(0.9777);">PlatformDeviceId</span><span id="t34" class="t" style="left:845.4px;top:21.39px;font-size:11px;color:#8e8e8e;font-weight:normal;font-style:normal;font-family:'Liberation Sans', sans-serif;transform:scaleX(0.9774);">Filter</span><span id="t35" class="t" style="left:0.9px;top:46.29px;font-size:11px;color:#000;font-weight:normal;font-style:normal;font-family:'Liberation Sans', sans-serif;transform:scaleX(0.9388);">25</span><span id="t36" class="t" style="left:230px;top:45.29px;font-size:11px;color:#c2c2c2;font-weight:normal;font-style:italic;font-family:'Liberation Sans', sans-serif;transform:scaleX(0.8107);">NULL</span><span id="t37" class="t" style="left:301.4px;top:45.29px;font-size:11px;color:#000;font-weight:normal;font-style:normal;font-family:'Liberation Sans', sans-serif;transform:scaleX(0.9495);">1758285358</span><span id="t38" class="t" style="left:379.4px;top:45.29px;font-size:11px;color:#000;font-weight:normal;font-style:normal;font-family:'Liberation Sans', sans-serif;transform:scaleX(0.9495);">1760877358</span><span id="t39" class="t" style="left:443.3px;top:45.29px;font-size:11px;color:#000;font-weight:normal;font-style:normal;font-family:'Liberation Sans', sans-serif;transform:scaleX(0.9678);">{&quot;displayText&quot;:&quot;System Information&quot;,&quot;activationUri&quot;:&quot;ms-…</span><span id="t40" class="t" style="left:770.1px;top:45.29px;font-size:11px;color:#000;font-weight:normal;font-style:normal;font-family:'Liberation Sans', sans-serif;transform:scaleX(1.0939);">3</span><span id="t41" class="t" style="left:831.2px;top:45.29px;font-size:11px;color:#000;font-weight:normal;font-style:normal;font-family:'Liberation Sans', sans-serif;transform:scaleX(1.1265);">0</span><span id="t42" class="t" style="left:844.9px;top:45.29px;font-size:11px;color:#000;font-weight:normal;font-style:normal;font-family:'Liberation Sans', sans-serif;transform:scaleX(0.9239);">Cs29pNYbbZIiuR9ow4BPT8dM+xSgQ16leuy</span><span id="t43" class="t" style="left:1048.9px;top:45.29px;font-size:11px;color:#000;font-weight:normal;font-style:normal;font-family:'Liberation Sans', sans-serif;transform:scaleX(1.0349);">A</span><span id="t44" class="t" style="left:0.9px;top:70.29px;font-size:11px;color:#000;font-weight:normal;font-style:normal;font-family:'Liberation Sans', sans-serif;transform:scaleX(0.9388);">26</span><span id="t45" class="t" style="left:230px;top:69.29px;font-size:11px;color:#c2c2c2;font-weight:normal;font-style:italic;font-family:'Liberation Sans', sans-serif;transform:scaleX(0.8107);">NULL</span><span id="t46" class="t" style="left:301.4px;top:69.29px;font-size:11px;color:#000;font-weight:normal;font-style:normal;font-family:'Liberation Sans', sans-serif;transform:scaleX(0.9495);">1758285374</span><span id="t47" class="t" style="left:379.4px;top:69.29px;font-size:11px;color:#000;font-weight:normal;font-style:normal;font-family:'Liberation Sans', sans-serif;transform:scaleX(0.9495);">1758890174</span><span id="t48" class="t" style="left:443.3px;top:69.29px;font-size:11px;color:#000;font-weight:normal;font-style:normal;font-family:'Liberation Sans', sans-serif;transform:scaleX(0.9571);">{&quot;gdprType&quot;:&quot;ProductAndServiceUsage&quot;,&quot;clipboardDataId&quot;:&quot;{…</span><span id="t49" class="t" style="left:770.1px;top:69.29px;font-size:11px;color:#000;font-weight:normal;font-style:normal;font-family:'Liberation Sans', sans-serif;transform:scaleX(1.0939);">3</span><span id="t50" class="t" style="left:831.2px;top:69.29px;font-size:11px;color:#000;font-weight:normal;font-style:normal;font-family:'Liberation Sans', sans-serif;transform:scaleX(1.1265);">0</span><span id="t51" class="t" style="left:844.9px;top:69.29px;font-size:11px;color:#000;font-weight:normal;font-style:normal;font-family:'Liberation Sans', sans-serif;transform:scaleX(0.9239);">Cs29pNYbbZIiuR9ow4BPT8dM+xSgQ16leuy</span><span id="t52" class="t" style="left:1048.9px;top:69.29px;font-size:11px;color:#000;font-weight:normal;font-style:normal;font-family:'Liberation Sans', sans-serif;transform:scaleX(1.0349);">A</span><span id="t53" class="t" style="left:0.9px;top:94.29px;font-size:11px;color:#000;font-weight:normal;font-style:normal;font-family:'Liberation Sans', sans-serif;transform:scaleX(0.9388);">27</span><span id="t54" class="t" style="left:230px;top:93.29px;font-size:11px;color:#c2c2c2;font-weight:normal;font-style:italic;font-family:'Liberation Sans', sans-serif;transform:scaleX(0.8107);">NULL</span><span id="t55" class="t" style="left:301.4px;top:93.29px;font-size:11px;color:#000;font-weight:normal;font-style:normal;font-family:'Liberation Sans', sans-serif;transform:scaleX(0.9495);">1758285394</span><span id="t56" class="t" style="left:379.4px;top:93.29px;font-size:11px;color:#000;font-weight:normal;font-style:normal;font-family:'Liberation Sans', sans-serif;transform:scaleX(0.9495);">1758890194</span><span id="t57" class="t" style="left:443.3px;top:93.29px;font-size:11px;color:#000;font-weight:normal;font-style:normal;font-family:'Liberation Sans', sans-serif;transform:scaleX(0.9571);">{&quot;gdprType&quot;:&quot;ProductAndServiceUsage&quot;,&quot;clipboardDataId&quot;:&quot;{…</span><span id="t58" class="t" style="left:770.1px;top:93.29px;font-size:11px;color:#000;font-weight:normal;font-style:normal;font-family:'Liberation Sans', sans-serif;transform:scaleX(1.0939);">3</span><span id="t59" class="t" style="left:831.2px;top:93.29px;font-size:11px;color:#000;font-weight:normal;font-style:normal;font-family:'Liberation Sans', sans-serif;transform:scaleX(1.1265);">0</span><span id="t60" class="t" style="left:844.9px;top:93.29px;font-size:11px;color:#000;font-weight:normal;font-style:normal;font-family:'Liberation Sans', sans-serif;transform:scaleX(0.9239);">Cs29pNYbbZIiuR9ow4BPT8dM+xSgQ16leuy</span><span id="t61" class="t" style="left:1048.9px;top:93.29px;font-size:11px;color:#000;font-weight:normal;font-style:normal;font-family:'Liberation Sans', sans-serif;transform:scaleX(1.0349);">A</span><span id="t62" class="t" style="left:0.9px;top:118.29px;font-size:11px;color:#000;font-weight:normal;font-style:normal;font-family:'Liberation Sans', sans-serif;transform:scaleX(0.9388);">28</span><span id="t63" class="t" style="left:230px;top:117.29px;font-size:11px;color:#c2c2c2;font-weight:normal;font-style:italic;font-family:'Liberation Sans', sans-serif;transform:scaleX(0.8107);">NULL</span><span id="t64" class="t" style="left:301.4px;top:117.29px;font-size:11px;color:#000;font-weight:normal;font-style:normal;font-family:'Liberation Sans', sans-serif;transform:scaleX(0.9495);">1758285437</span><span id="t65" class="t" style="left:379.4px;top:117.29px;font-size:11px;color:#000;font-weight:normal;font-style:normal;font-family:'Liberation Sans', sans-serif;transform:scaleX(0.9495);">1760877437</span><span id="t66" class="t" style="left:443.3px;top:117.29px;font-size:11px;color:#000;font-weight:normal;font-style:normal;font-family:'Liberation Sans', sans-serif;transform:scaleX(0.9722);">{&quot;type&quot;:&quot;UserEngaged&quot;,&quot;reportingApp&quot;:&quot;ShellActivityMonitor&quot;…</span><span id="t67" class="t" style="left:770.1px;top:117.29px;font-size:11px;color:#000;font-weight:normal;font-style:normal;font-family:'Liberation Sans', sans-serif;transform:scaleX(1.0939);">3</span><span id="t68" class="t" style="left:831.2px;top:117.29px;font-size:11px;color:#000;font-weight:normal;font-style:normal;font-family:'Liberation Sans', sans-serif;transform:scaleX(1.1265);">0</span><span id="t69" class="t" style="left:844.9px;top:117.29px;font-size:11px;color:#000;font-weight:normal;font-style:normal;font-family:'Liberation Sans', sans-serif;transform:scaleX(0.9239);">Cs29pNYbbZIiuR9ow4BPT8dM+xSgQ16leuy</span><span id="t70" class="t" style="left:1048.9px;top:117.29px;font-size:11px;color:#000;font-weight:normal;font-style:normal;font-family:'Liberation Sans', sans-serif;transform:scaleX(1.0349);">A</span><span id="t71" class="t" style="left:0.9px;top:142.29px;font-size:11px;color:#000;font-weight:normal;font-style:normal;font-family:'Liberation Sans', sans-serif;transform:scaleX(0.9388);">29</span><span id="t72" class="t" style="left:230px;top:141.29px;font-size:11px;color:#c2c2c2;font-weight:normal;font-style:italic;font-family:'Liberation Sans', sans-serif;transform:scaleX(0.8107);">NULL</span><span id="t73" class="t" style="left:301.4px;top:141.29px;font-size:11px;color:#000;font-weight:normal;font-style:normal;font-family:'Liberation Sans', sans-serif;transform:scaleX(0.9495);">1758285499</span><span id="t74" class="t" style="left:379.4px;top:141.29px;font-size:11px;color:#000;font-weight:normal;font-style:normal;font-family:'Liberation Sans', sans-serif;transform:scaleX(0.9495);">1760877499</span><span id="t75" class="t" style="left:443.3px;top:141.29px;font-size:11px;color:#000;font-weight:normal;font-style:normal;font-family:'Liberation Sans', sans-serif;transform:scaleX(0.9722);">{&quot;type&quot;:&quot;UserEngaged&quot;,&quot;reportingApp&quot;:&quot;ShellActivityMonitor&quot;…</span><span id="t76" class="t" style="left:770.1px;top:141.29px;font-size:11px;color:#000;font-weight:normal;font-style:normal;font-family:'Liberation Sans', sans-serif;transform:scaleX(1.0939);">3</span><span id="t77" class="t" style="left:831.2px;top:141.29px;font-size:11px;color:#000;font-weight:normal;font-style:normal;font-family:'Liberation Sans', sans-serif;transform:scaleX(1.1265);">0</span><span id="t78" class="t" style="left:844.9px;top:141.29px;font-size:11px;color:#000;font-weight:normal;font-style:normal;font-family:'Liberation Sans', sans-serif;transform:scaleX(0.9239);">Cs29pNYbbZIiuR9ow4BPT8dM+xSgQ16leuy</span><span id="t79" class="t" style="left:1048.9px;top:141.29px;font-size:11px;color:#000;font-weight:normal;font-style:normal;font-family:'Liberation Sans', sans-serif;transform:scaleX(1.0349);">A</span><span id="t80" class="t" style="left:0.9px;top:166.29px;font-size:11px;color:#000;font-weight:normal;font-style:normal;font-family:'Liberation Sans', sans-serif;transform:scaleX(0.9388);">30</span><span id="t81" class="t" style="left:230px;top:165.29px;font-size:11px;color:#c2c2c2;font-weight:normal;font-style:italic;font-family:'Liberation Sans', sans-serif;transform:scaleX(0.8107);">NULL</span><span id="t82" class="t" style="left:301.4px;top:165.29px;font-size:11px;color:#000;font-weight:normal;font-style:normal;font-family:'Liberation Sans', sans-serif;transform:scaleX(0.9495);">1758285500</span><span id="t83" class="t" style="left:379.4px;top:165.29px;font-size:11px;color:#000;font-weight:normal;font-style:normal;font-family:'Liberation Sans', sans-serif;transform:scaleX(0.9495);">1760877506</span><span id="t84" class="t" style="left:443.3px;top:165.29px;font-size:11px;color:#000;font-weight:normal;font-style:normal;font-family:'Liberation Sans', sans-serif;transform:scaleX(0.9722);">{&quot;type&quot;:&quot;UserEngaged&quot;,&quot;reportingApp&quot;:&quot;ShellActivityMonitor&quot;…</span><span id="t85" class="t" style="left:770.1px;top:165.29px;font-size:11px;color:#000;font-weight:normal;font-style:normal;font-family:'Liberation Sans', sans-serif;transform:scaleX(1.0939);">3</span><span id="t86" class="t" style="left:831.2px;top:165.29px;font-size:11px;color:#000;font-weight:normal;font-style:normal;font-family:'Liberation Sans', sans-serif;transform:scaleX(1.1265);">0</span><span id="t87" class="t" style="left:844.9px;top:165.29px;font-size:11px;color:#000;font-weight:normal;font-style:normal;font-family:'Liberation Sans', sans-serif;transform:scaleX(0.9239);">Cs29pNYbbZIiuR9ow4BPT8dM+xSgQ16leuy</span><span id="t88" class="t" style="left:1048.9px;top:165.29px;font-size:11px;color:#000;font-weight:normal;font-style:normal;font-family:'Liberation Sans', sans-serif;transform:scaleX(1.0349);">A</span><span id="t89" class="t" style="left:0.9px;top:190.29px;font-size:11px;color:#000;font-weight:normal;font-style:normal;font-family:'Liberation Sans', sans-serif;transform:scaleX(0.9388);">31</span><span id="t90" class="t" style="left:230px;top:189.29px;font-size:11px;color:#c2c2c2;font-weight:normal;font-style:italic;font-family:'Liberation Sans', sans-serif;transform:scaleX(0.8107);">NULL</span><span id="t91" class="t" style="left:301.4px;top:189.29px;font-size:11px;color:#000;font-weight:normal;font-style:normal;font-family:'Liberation Sans', sans-serif;transform:scaleX(0.9495);">1758286172</span><span id="t92" class="t" style="left:379.4px;top:189.29px;font-size:11px;color:#000;font-weight:normal;font-style:normal;font-family:'Liberation Sans', sans-serif;transform:scaleX(0.9495);">1760878172</span><span id="t93" class="t" style="left:443.3px;top:189.29px;font-size:11px;color:#000;font-weight:normal;font-style:normal;font-family:'Liberation Sans', sans-serif;transform:scaleX(0.9552);">{&quot;displayText&quot;:&quot;Windows Sandbox&quot;,&quot;activationUri&quot;:&quot;ms-…</span><span id="t94" class="t" style="left:770.1px;top:189.29px;font-size:11px;color:#000;font-weight:normal;font-style:normal;font-family:'Liberation Sans', sans-serif;transform:scaleX(1.0939);">3</span><span id="t95" class="t" style="left:831.2px;top:189.29px;font-size:11px;color:#000;font-weight:normal;font-style:normal;font-family:'Liberation Sans', sans-serif;transform:scaleX(1.1265);">0</span><span id="t96" class="t" style="left:844.9px;top:189.29px;font-size:11px;color:#000;font-weight:normal;font-style:normal;font-family:'Liberation Sans', sans-serif;transform:scaleX(0.9239);">Cs29pNYbbZIiuR9ow4BPT8dM+xSgQ16leuy</span><span id="t97" class="t" style="left:1048.9px;top:189.29px;font-size:11px;color:#000;font-weight:normal;font-style:normal;font-family:'Liberation Sans', sans-serif;transform:scaleX(1.0349);">A</span><span id="t98" class="t" style="left:0.9px;top:214.29px;font-size:11px;color:#000;font-weight:normal;font-style:normal;font-family:'Liberation Sans', sans-serif;transform:scaleX(0.9388);">32</span><span id="t99" class="t" style="left:230px;top:213.29px;font-size:11px;color:#c2c2c2;font-weight:normal;font-style:italic;font-family:'Liberation Sans', sans-serif;transform:scaleX(0.8107);">NULL</span><span id="t100" class="t" style="left:301.4px;top:213.29px;font-size:11px;color:#000;font-weight:normal;font-style:normal;font-family:'Liberation Sans', sans-serif;transform:scaleX(0.9495);">1758286207</span><span id="t101" class="t" style="left:379.4px;top:213.29px;font-size:11px;color:#000;font-weight:normal;font-style:normal;font-family:'Liberation Sans', sans-serif;transform:scaleX(0.9495);">1760878207</span><span id="t102" class="t" style="left:443.3px;top:213.29px;font-size:11px;color:#000;font-weight:normal;font-style:normal;font-family:'Liberation Sans', sans-serif;transform:scaleX(0.9722);">{&quot;type&quot;:&quot;UserEngaged&quot;,&quot;reportingApp&quot;:&quot;ShellActivityMonitor&quot;…</span><span id="t103" class="t" style="left:770.1px;top:213.29px;font-size:11px;color:#000;font-weight:normal;font-style:normal;font-family:'Liberation Sans', sans-serif;transform:scaleX(1.0939);">3</span><span id="t104" class="t" style="left:831.2px;top:213.29px;font-size:11px;color:#000;font-weight:normal;font-style:normal;font-family:'Liberation Sans', sans-serif;transform:scaleX(1.1265);">0</span><span id="t105" class="t" style="left:844.9px;top:213.29px;font-size:11px;color:#000;font-weight:normal;font-style:normal;font-family:'Liberation Sans', sans-serif;transform:scaleX(0.9239);">Cs29pNYbbZIiuR9ow4BPT8dM+xSgQ16leuy</span><span id="t106" class="t" style="left:1048.9px;top:213.29px;font-size:11px;color:#000;font-weight:normal;font-style:normal;font-family:'Liberation Sans', sans-serif;transform:scaleX(1.0349);">A</span><span id="t107" class="t" style="left:0.9px;top:238.29px;font-size:11px;color:#000;font-weight:normal;font-style:normal;font-family:'Liberation Sans', sans-serif;transform:scaleX(0.9388);">33</span><span id="t108" class="t" style="left:230px;top:237.29px;font-size:11px;color:#c2c2c2;font-weight:normal;font-style:italic;font-family:'Liberation Sans', sans-serif;transform:scaleX(0.8107);">NULL</span><span id="t109" class="t" style="left:301.4px;top:237.29px;font-size:11px;color:#000;font-weight:normal;font-style:normal;font-family:'Liberation Sans', sans-serif;transform:scaleX(0.9495);">1758286207</span><span id="t110" class="t" style="left:379.4px;top:237.29px;font-size:11px;color:#000;font-weight:normal;font-style:normal;font-family:'Liberation Sans', sans-serif;transform:scaleX(0.9495);">1760878207</span><span id="t111" class="t" style="left:443.3px;top:237.29px;font-size:11px;color:#000;font-weight:normal;font-style:normal;font-family:'Liberation Sans', sans-serif;transform:scaleX(0.9532);">{&quot;displayText&quot;:&quot;WindowsSandboxClient.exe&quot;,&quot;activationUri&quot;:&quot;…</span><span id="t112" class="t" style="left:770.1px;top:237.29px;font-size:11px;color:#000;font-weight:normal;font-style:normal;font-family:'Liberation Sans', sans-serif;transform:scaleX(1.0939);">3</span><span id="t113" class="t" style="left:831.2px;top:237.29px;font-size:11px;color:#000;font-weight:normal;font-style:normal;font-family:'Liberation Sans', sans-serif;transform:scaleX(1.1265);">0</span><span id="t114" class="t" style="left:844.9px;top:237.29px;font-size:11px;color:#000;font-weight:normal;font-style:normal;font-family:'Liberation Sans', sans-serif;transform:scaleX(0.9239);">Cs29pNYbbZIiuR9ow4BPT8dM+xSgQ16leuy</span><span id="t115" class="t" style="left:1048.9px;top:237.29px;font-size:11px;color:#000;font-weight:normal;font-style:normal;font-family:'Liberation Sans', sans-serif;transform:scaleX(1.0349);">A</span><span id="t116" class="t" style="left:0.9px;top:262.29px;font-size:11px;color:#000;font-weight:normal;font-style:normal;font-family:'Liberation Sans', sans-serif;transform:scaleX(0.9388);">34</span><span id="t117" class="t" style="left:230px;top:261.29px;font-size:11px;color:#c2c2c2;font-weight:normal;font-style:italic;font-family:'Liberation Sans', sans-serif;transform:scaleX(0.8107);">NULL</span><span id="t118" class="t" style="left:301.4px;top:261.29px;font-size:11px;color:#000;font-weight:normal;font-style:normal;font-family:'Liberation Sans', sans-serif;transform:scaleX(0.9495);">1758286218</span><span id="t119" class="t" style="left:379.4px;top:261.29px;font-size:11px;color:#000;font-weight:normal;font-style:normal;font-family:'Liberation Sans', sans-serif;transform:scaleX(0.9495);">1760878218</span><span id="t120" class="t" style="left:443.3px;top:261.29px;font-size:11px;color:#000;font-weight:normal;font-style:normal;font-family:'Liberation Sans', sans-serif;transform:scaleX(0.9722);">{&quot;type&quot;:&quot;UserEngaged&quot;,&quot;reportingApp&quot;:&quot;ShellActivityMonitor&quot;…</span><span id="t121" class="t" style="left:770.1px;top:261.29px;font-size:11px;color:#000;font-weight:normal;font-style:normal;font-family:'Liberation Sans', sans-serif;transform:scaleX(1.0939);">3</span><span id="t122" class="t" style="left:831.2px;top:261.29px;font-size:11px;color:#000;font-weight:normal;font-style:normal;font-family:'Liberation Sans', sans-serif;transform:scaleX(1.1265);">0</span><span id="t123" class="t" style="left:844.9px;top:261.29px;font-size:11px;color:#000;font-weight:normal;font-style:normal;font-family:'Liberation Sans', sans-serif;transform:scaleX(0.9239);">Cs29pNYbbZIiuR9ow4BPT8dM+xSgQ16leuy</span><span id="t124" class="t" style="left:1048.9px;top:261.29px;font-size:11px;color:#000;font-weight:normal;font-style:normal;font-family:'Liberation Sans', sans-serif;transform:scaleX(1.0349);">A</span><span id="t125" class="t" style="left:0.9px;top:286.29px;font-size:11px;color:#000;font-weight:normal;font-style:normal;font-family:'Liberation Sans', sans-serif;transform:scaleX(0.9388);">35</span><span id="t126" class="t" style="left:230px;top:285.29px;font-size:11px;color:#c2c2c2;font-weight:normal;font-style:italic;font-family:'Liberation Sans', sans-serif;transform:scaleX(0.8107);">NULL</span><span id="t127" class="t" style="left:301.4px;top:285.29px;font-size:11px;color:#000;font-weight:normal;font-style:normal;font-family:'Liberation Sans', sans-serif;transform:scaleX(0.9495);">1758286220</span><span id="t128" class="t" style="left:379.4px;top:285.29px;font-size:11px;color:#000;font-weight:normal;font-style:normal;font-family:'Liberation Sans', sans-serif;transform:scaleX(0.9495);">1760878220</span><span id="t129" class="t" style="left:443.3px;top:285.29px;font-size:11px;color:#000;font-weight:normal;font-style:normal;font-family:'Liberation Sans', sans-serif;transform:scaleX(0.9722);">{&quot;type&quot;:&quot;UserEngaged&quot;,&quot;reportingApp&quot;:&quot;ShellActivityMonitor&quot;…</span><span id="t130" class="t" style="left:770.1px;top:285.29px;font-size:11px;color:#000;font-weight:normal;font-style:normal;font-family:'Liberation Sans', sans-serif;transform:scaleX(1.0939);">3</span><span id="t131" class="t" style="left:831.2px;top:285.29px;font-size:11px;color:#000;font-weight:normal;font-style:normal;font-family:'Liberation Sans', sans-serif;transform:scaleX(1.1265);">0</span><span id="t132" class="t" style="left:844.9px;top:285.29px;font-size:11px;color:#000;font-weight:normal;font-style:normal;font-family:'Liberation Sans', sans-serif;transform:scaleX(0.9239);">Cs29pNYbbZIiuR9ow4BPT8dM+xSgQ16leuy</span><span id="t133" class="t" style="left:1048.9px;top:285.29px;font-size:11px;color:#000;font-weight:normal;font-style:normal;font-family:'Liberation Sans', sans-serif;transform:scaleX(1.0349);">A</span><span id="t134" class="t" style="left:0.9px;top:310.29px;font-size:11px;color:#000;font-weight:normal;font-style:normal;font-family:'Liberation Sans', sans-serif;transform:scaleX(0.9388);">36</span><span id="t135" class="t" style="left:230px;top:309.29px;font-size:11px;color:#c2c2c2;font-weight:normal;font-style:italic;font-family:'Liberation Sans', sans-serif;transform:scaleX(0.8107);">NULL</span><span id="t136" class="t" style="left:301.4px;top:309.29px;font-size:11px;color:#000;font-weight:normal;font-style:normal;font-family:'Liberation Sans', sans-serif;transform:scaleX(0.9495);">1758286578</span><span id="t137" class="t" style="left:379.4px;top:309.29px;font-size:11px;color:#000;font-weight:normal;font-style:normal;font-family:'Liberation Sans', sans-serif;transform:scaleX(0.9495);">1760879082</span><span id="t138" class="t" style="left:443.3px;top:309.29px;font-size:11px;color:#000;font-weight:normal;font-style:normal;font-family:'Liberation Sans', sans-serif;transform:scaleX(0.9722);">{&quot;type&quot;:&quot;UserEngaged&quot;,&quot;reportingApp&quot;:&quot;ShellActivityMonitor&quot;…</span><span id="t139" class="t" style="left:770.1px;top:309.29px;font-size:11px;color:#000;font-weight:normal;font-style:normal;font-family:'Liberation Sans', sans-serif;transform:scaleX(1.0939);">3</span><span id="t140" class="t" style="left:831.2px;top:309.29px;font-size:11px;color:#000;font-weight:normal;font-style:normal;font-family:'Liberation Sans', sans-serif;transform:scaleX(1.1265);">0</span><span id="t141" class="t" style="left:844.9px;top:309.29px;font-size:11px;color:#000;font-weight:normal;font-style:normal;font-family:'Liberation Sans', sans-serif;transform:scaleX(0.9239);">Cs29pNYbbZIiuR9ow4BPT8dM+xSgQ16leuy</span><span id="t142" class="t" style="left:1048.9px;top:309.29px;font-size:11px;color:#000;font-weight:normal;font-style:normal;font-family:'Liberation Sans', sans-serif;transform:scaleX(1.0349);">A</span><span id="t143" class="t" style="left:0.9px;top:334.29px;font-size:11px;color:#000;font-weight:normal;font-style:normal;font-family:'Liberation Sans', sans-serif;transform:scaleX(0.9388);">37</span><span id="t144" class="t" style="left:230px;top:333.29px;font-size:11px;color:#c2c2c2;font-weight:normal;font-style:italic;font-family:'Liberation Sans', sans-serif;transform:scaleX(0.8107);">NULL</span><span id="t145" class="t" style="left:301.4px;top:333.29px;font-size:11px;color:#000;font-weight:normal;font-style:normal;font-family:'Liberation Sans', sans-serif;transform:scaleX(0.9495);">1758287026</span><span id="t146" class="t" style="left:379.4px;top:333.29px;font-size:11px;color:#000;font-weight:normal;font-style:normal;font-family:'Liberation Sans', sans-serif;transform:scaleX(0.9495);">1760879026</span><span id="t147" class="t" style="left:443.3px;top:333.29px;font-size:11px;color:#000;font-weight:normal;font-style:normal;font-family:'Liberation Sans', sans-serif;transform:scaleX(0.9631);">{&quot;displayText&quot;:&quot;Notepad&quot;,&quot;activationUri&quot;:&quot;ms-…</span><span id="t148" class="t" style="left:770.1px;top:333.29px;font-size:11px;color:#000;font-weight:normal;font-style:normal;font-family:'Liberation Sans', sans-serif;transform:scaleX(1.0939);">3</span><span id="t149" class="t" style="left:831.2px;top:333.29px;font-size:11px;color:#000;font-weight:normal;font-style:normal;font-family:'Liberation Sans', sans-serif;transform:scaleX(1.1265);">0</span><span id="t150" class="t" style="left:844.9px;top:333.29px;font-size:11px;color:#000;font-weight:normal;font-style:normal;font-family:'Liberation Sans', sans-serif;transform:scaleX(0.9239);">Cs29pNYbbZIiuR9ow4BPT8dM+xSgQ16leuy</span><span id="t151" class="t" style="left:1048.9px;top:333.29px;font-size:11px;color:#000;font-weight:normal;font-style:normal;font-family:'Liberation Sans', sans-serif;transform:scaleX(1.0349);">A</span><span id="t152" class="t" style="left:1.1px;top:358.29px;font-size:11px;color:#000;font-weight:bold;font-style:normal;font-family:'Liberation Sans', sans-serif;transform:scaleX(0.9469);">38</span><span id="t153" class="t" style="left:230px;top:357.29px;font-size:11px;color:#c2c2c2;font-weight:normal;font-style:italic;font-family:'Liberation Sans', sans-serif;transform:scaleX(0.8107);">NULL</span><span id="t154" class="t" style="left:301.4px;top:357.29px;font-size:11px;color:#000;font-weight:normal;font-style:normal;font-family:'Liberation Sans', sans-serif;transform:scaleX(0.9495);">1758287026</span><span id="t155" class="t" style="left:379.4px;top:357.29px;font-size:11px;color:#000;font-weight:normal;font-style:normal;font-family:'Liberation Sans', sans-serif;transform:scaleX(0.9495);">1760879026</span><span id="t156" class="t" style="left:443.3px;top:357.29px;font-size:11px;color:#fff;font-weight:normal;font-style:normal;font-family:'Liberation Sans', sans-serif;transform:scaleX(0.9666);">{&quot;displayText&quot;:&quot;credi.txt&quot;,&quot;activationUri&quot;:&quot;ms-…</span><span id="t157" class="t" style="left:770.1px;top:357.29px;font-size:11px;color:#000;font-weight:normal;font-style:normal;font-family:'Liberation Sans', sans-serif;transform:scaleX(1.0939);">1</span><span id="t158" class="t" style="left:831.2px;top:357.29px;font-size:11px;color:#000;font-weight:normal;font-style:normal;font-family:'Liberation Sans', sans-serif;transform:scaleX(1.1265);">0</span><span id="t159" class="t" style="left:844.9px;top:357.29px;font-size:11px;color:#000;font-weight:normal;font-style:normal;font-family:'Liberation Sans', sans-serif;transform:scaleX(0.9239);">Cs29pNYbbZIiuR9ow4BPT8dM+xSgQ16leuy</span><span id="t160" class="t" style="left:1048.9px;top:357.29px;font-size:11px;color:#000;font-weight:normal;font-style:normal;font-family:'Liberation Sans', sans-serif;transform:scaleX(1.0349);">A</span><span id="t161" class="t" style="left:0.9px;top:382.29px;font-size:11px;color:#000;font-weight:normal;font-style:normal;font-family:'Liberation Sans', sans-serif;transform:scaleX(0.9388);">39</span><span id="t162" class="t" style="left:230px;top:381.29px;font-size:11px;color:#c2c2c2;font-weight:normal;font-style:italic;font-family:'Liberation Sans', sans-serif;transform:scaleX(0.8107);">NULL</span><span id="t163" class="t" style="left:301.4px;top:381.29px;font-size:11px;color:#000;font-weight:normal;font-style:normal;font-family:'Liberation Sans', sans-serif;transform:scaleX(0.9495);">1758287026</span><span id="t164" class="t" style="left:379.4px;top:381.29px;font-size:11px;color:#000;font-weight:normal;font-style:normal;font-family:'Liberation Sans', sans-serif;transform:scaleX(0.9495);">1760879048</span><span id="t165" class="t" style="left:443.3px;top:381.29px;font-size:11px;color:#000;font-weight:normal;font-style:normal;font-family:'Liberation Sans', sans-serif;transform:scaleX(0.9722);">{&quot;type&quot;:&quot;UserEngaged&quot;,&quot;reportingApp&quot;:&quot;ShellActivityMonitor&quot;…</span><span id="t166" class="t" style="left:770.1px;top:381.29px;font-size:11px;color:#000;font-weight:normal;font-style:normal;font-family:'Liberation Sans', sans-serif;transform:scaleX(1.0939);">1</span><span id="t167" class="t" style="left:831.2px;top:381.29px;font-size:11px;color:#000;font-weight:normal;font-style:normal;font-family:'Liberation Sans', sans-serif;transform:scaleX(1.1265);">0</span><span id="t168" class="t" style="left:844.9px;top:381.29px;font-size:11px;color:#000;font-weight:normal;font-style:normal;font-family:'Liberation Sans', sans-serif;transform:scaleX(0.9239);">Cs29pNYbbZIiuR9ow4BPT8dM+xSgQ16leuy</span><span id="t169" class="t" style="left:1048.9px;top:381.29px;font-size:11px;color:#000;font-weight:normal;font-style:normal;font-family:'Liberation Sans', sans-serif;transform:scaleX(1.0349);">A</span><span id="t170" class="t" style="left:0.9px;top:406.29px;font-size:11px;color:#000;font-weight:normal;font-style:normal;font-family:'Liberation Sans', sans-serif;transform:scaleX(0.9388);">40</span><span id="t171" class="t" style="left:230px;top:405.29px;font-size:11px;color:#c2c2c2;font-weight:normal;font-style:italic;font-family:'Liberation Sans', sans-serif;transform:scaleX(0.8107);">NULL</span><span id="t172" class="t" style="left:301.4px;top:405.29px;font-size:11px;color:#000;font-weight:normal;font-style:normal;font-family:'Liberation Sans', sans-serif;transform:scaleX(0.9495);">1758287082</span><span id="t173" class="t" style="left:379.4px;top:405.29px;font-size:11px;color:#000;font-weight:normal;font-style:normal;font-family:'Liberation Sans', sans-serif;transform:scaleX(0.9495);">1760879082</span><span id="t174" class="t" style="left:443.3px;top:405.29px;font-size:11px;color:#000;font-weight:normal;font-style:normal;font-family:'Liberation Sans', sans-serif;transform:scaleX(0.9566);">{&quot;displayText&quot;:&quot;File Explorer&quot;,&quot;activationUri&quot;:&quot;ms-…</span><span id="t175" class="t" style="left:770.1px;top:405.29px;font-size:11px;color:#000;font-weight:normal;font-style:normal;font-family:'Liberation Sans', sans-serif;transform:scaleX(1.0939);">3</span><span id="t176" class="t" style="left:831.2px;top:405.29px;font-size:11px;color:#000;font-weight:normal;font-style:normal;font-family:'Liberation Sans', sans-serif;transform:scaleX(1.1265);">0</span><span id="t177" class="t" style="left:844.9px;top:405.29px;font-size:11px;color:#000;font-weight:normal;font-style:normal;font-family:'Liberation Sans', sans-serif;transform:scaleX(0.9239);">Cs29pNYbbZIiuR9ow4BPT8dM+xSgQ16leuy</span><span id="t178" class="t" style="left:1048.9px;top:405.29px;font-size:11px;color:#000;font-weight:normal;font-style:normal;font-family:'Liberation Sans', sans-serif;transform:scaleX(1.0349);">A</span><span id="t179" class="t" style="left:0.9px;top:430.29px;font-size:11px;color:#000;font-weight:normal;font-style:normal;font-family:'Liberation Sans', sans-serif;transform:scaleX(0.9388);">41</span><span id="t180" class="t" style="left:230px;top:429.29px;font-size:11px;color:#c2c2c2;font-weight:normal;font-style:italic;font-family:'Liberation Sans', sans-serif;transform:scaleX(0.8107);">NULL</span><span id="t181" class="t" style="left:301.4px;top:429.29px;font-size:11px;color:#000;font-weight:normal;font-style:normal;font-family:'Liberation Sans', sans-serif;transform:scaleX(0.9495);">1758287095</span><span id="t182" class="t" style="left:379.4px;top:429.29px;font-size:11px;color:#000;font-weight:normal;font-style:normal;font-family:'Liberation Sans', sans-serif;transform:scaleX(0.9495);">1760879095</span><span id="t183" class="t" style="left:443.3px;top:429.29px;font-size:11px;color:#000;font-weight:normal;font-style:normal;font-family:'Liberation Sans', sans-serif;transform:scaleX(0.9722);">{&quot;type&quot;:&quot;UserEngaged&quot;,&quot;reportingApp&quot;:&quot;ShellActivityMonitor&quot;…</span><span id="t184" class="t" style="left:770.1px;top:429.29px;font-size:11px;color:#000;font-weight:normal;font-style:normal;font-family:'Liberation Sans', sans-serif;transform:scaleX(1.0939);">3</span><span id="t185" class="t" style="left:831.2px;top:429.29px;font-size:11px;color:#000;font-weight:normal;font-style:normal;font-family:'Liberation Sans', sans-serif;transform:scaleX(1.1265);">0</span><span id="t186" class="t" style="left:844.9px;top:429.29px;font-size:11px;color:#000;font-weight:normal;font-style:normal;font-family:'Liberation Sans', sans-serif;transform:scaleX(0.9239);">Cs29pNYbbZIiuR9ow4BPT8dM+xSgQ16leuy</span><span id="t187" class="t" style="left:1048.9px;top:429.29px;font-size:11px;color:#000;font-weight:normal;font-style:normal;font-family:'Liberation Sans', sans-serif;transform:scaleX(1.0349);">A</span><span id="t188" class="t" style="left:0.9px;top:454.29px;font-size:11px;color:#000;font-weight:normal;font-style:normal;font-family:'Liberation Sans', sans-serif;transform:scaleX(0.9388);">42</span><span id="t189" class="t" style="left:230px;top:453.29px;font-size:11px;color:#c2c2c2;font-weight:normal;font-style:italic;font-family:'Liberation Sans', sans-serif;transform:scaleX(0.8107);">NULL</span><span id="t190" class="t" style="left:301.4px;top:453.29px;font-size:11px;color:#000;font-weight:normal;font-style:normal;font-family:'Liberation Sans', sans-serif;transform:scaleX(0.9495);">1758287104</span><span id="t191" class="t" style="left:379.4px;top:453.29px;font-size:11px;color:#000;font-weight:normal;font-style:normal;font-family:'Liberation Sans', sans-serif;transform:scaleX(0.9495);">1760879104</span><span id="t192" class="t" style="left:443.3px;top:453.29px;font-size:11px;color:#000;font-weight:normal;font-style:normal;font-family:'Liberation Sans', sans-serif;transform:scaleX(0.9722);">{&quot;type&quot;:&quot;UserEngaged&quot;,&quot;reportingApp&quot;:&quot;ShellActivityMonitor&quot;…</span><span id="t193" class="t" style="left:770.1px;top:453.29px;font-size:11px;color:#000;font-weight:normal;font-style:normal;font-family:'Liberation Sans', sans-serif;transform:scaleX(1.0939);">3</span><span id="t194" class="t" style="left:831.2px;top:453.29px;font-size:11px;color:#000;font-weight:normal;font-style:normal;font-family:'Liberation Sans', sans-serif;transform:scaleX(1.1265);">0</span><span id="t195" class="t" style="left:844.9px;top:453.29px;font-size:11px;color:#000;font-weight:normal;font-style:normal;font-family:'Liberation Sans', sans-serif;transform:scaleX(0.9239);">Cs29pNYbbZIiuR9ow4BPT8dM+xSgQ16leuy</span><span id="t196" class="t" style="left:1048.9px;top:453.29px;font-size:11px;color:#000;font-weight:normal;font-style:normal;font-family:'Liberation Sans', sans-serif;transform:scaleX(1.0349);">A</span><span id="t197" class="t" style="left:0.9px;top:478.29px;font-size:11px;color:#000;font-weight:normal;font-style:normal;font-family:'Liberation Sans', sans-serif;transform:scaleX(0.9388);">43</span><span id="t198" class="t" style="left:230px;top:477.29px;font-size:11px;color:#c2c2c2;font-weight:normal;font-style:italic;font-family:'Liberation Sans', sans-serif;transform:scaleX(0.8107);">NULL</span><span id="t199" class="t" style="left:301.4px;top:477.29px;font-size:11px;color:#000;font-weight:normal;font-style:normal;font-family:'Liberation Sans', sans-serif;transform:scaleX(0.9495);">1758287109</span><span id="t200" class="t" style="left:379.4px;top:477.29px;font-size:11px;color:#000;font-weight:normal;font-style:normal;font-family:'Liberation Sans', sans-serif;transform:scaleX(0.9495);">1760879484</span><span id="t201" class="t" style="left:443.3px;top:477.29px;font-size:11px;color:#000;font-weight:normal;font-style:normal;font-family:'Liberation Sans', sans-serif;transform:scaleX(0.9722);">{&quot;type&quot;:&quot;UserEngaged&quot;,&quot;reportingApp&quot;:&quot;ShellActivityMonitor&quot;…</span><span id="t202" class="t" style="left:770.1px;top:477.29px;font-size:11px;color:#000;font-weight:normal;font-style:normal;font-family:'Liberation Sans', sans-serif;transform:scaleX(1.0939);">3</span><span id="t203" class="t" style="left:831.2px;top:477.29px;font-size:11px;color:#000;font-weight:normal;font-style:normal;font-family:'Liberation Sans', sans-serif;transform:scaleX(1.1265);">0</span><span id="t204" class="t" style="left:844.9px;top:477.29px;font-size:11px;color:#000;font-weight:normal;font-style:normal;font-family:'Liberation Sans', sans-serif;transform:scaleX(0.9239);">Cs29pNYbbZIiuR9ow4BPT8dM+xSgQ16leuy</span><span id="t205" class="t" style="left:1048.9px;top:477.29px;font-size:11px;color:#000;font-weight:normal;font-style:normal;font-family:'Liberation Sans', sans-serif;transform:scaleX(1.0349);">A</span><span id="t206" class="t" style="left:0.9px;top:502.29px;font-size:11px;color:#000;font-weight:normal;font-style:normal;font-family:'Liberation Sans', sans-serif;transform:scaleX(0.9388);">44</span><span id="t207" class="t" style="left:230px;top:501.29px;font-size:11px;color:#c2c2c2;font-weight:normal;font-style:italic;font-family:'Liberation Sans', sans-serif;transform:scaleX(0.8107);">NULL</span><span id="t208" class="t" style="left:301.4px;top:501.29px;font-size:11px;color:#000;font-weight:normal;font-style:normal;font-family:'Liberation Sans', sans-serif;transform:scaleX(0.9495);">1758287109</span><span id="t209" class="t" style="left:379.4px;top:501.29px;font-size:11px;color:#000;font-weight:normal;font-style:normal;font-family:'Liberation Sans', sans-serif;transform:scaleX(0.9495);">1760879109</span><span id="t210" class="t" style="left:443.3px;top:501.29px;font-size:11px;color:#000;font-weight:normal;font-style:normal;font-family:'Liberation Sans', sans-serif;transform:scaleX(0.9206);">{&quot;displayText&quot;:&quot;README_Place_These_Files.txt&quot;,&quot;activationUri…</span><span id="t211" class="t" style="left:770.1px;top:501.29px;font-size:11px;color:#000;font-weight:normal;font-style:normal;font-family:'Liberation Sans', sans-serif;transform:scaleX(1.0939);">1</span><span id="t212" class="t" style="left:831.2px;top:501.29px;font-size:11px;color:#000;font-weight:normal;font-style:normal;font-family:'Liberation Sans', sans-serif;transform:scaleX(1.1265);">0</span><span id="t213" class="t" style="left:844.9px;top:501.29px;font-size:11px;color:#000;font-weight:normal;font-style:normal;font-family:'Liberation Sans', sans-serif;transform:scaleX(0.9239);">Cs29pNYbbZIiuR9ow4BPT8dM+xSgQ16leuy</span><span id="t214" class="t" style="left:1048.9px;top:501.29px;font-size:11px;color:#000;font-weight:normal;font-style:normal;font-family:'Liberation Sans', sans-serif;transform:scaleX(1.0349);">A</span></div><div style="left:1094px;top:109px;width:243px;height:113px;overflow:hidden"><span id="t222" class="t" style="left:2.5px;top:-0.81px;font-size:11px;color:#3c3c3c;font-weight:normal;font-style:normal;font-family:'Liberation Sans', sans-serif;transform:scaleX(0.8653);">1</span><span id="t223" class="t" style="left:43.3px;top:0.20px;font-size:9px;color:#111;font-weight:normal;font-style:normal;font-family:'Liberation Mono', monospace;transform:scaleX(0.9914);">{</span><span id="t224" class="t" style="left:48.66px;top:0.20px;font-size:9px;color:#8b14a6;font-weight:normal;font-style:normal;font-family:'Liberation Mono', monospace;transform:scaleX(0.9923);">&quot;displayText&quot;</span><span id="t225" class="t" style="left:118.34px;top:0.20px;font-size:9px;color:#1a1ad0;font-weight:normal;font-style:normal;font-family:'Liberation Mono', monospace;transform:scaleX(0.9914);">:</span><span id="t226" class="t" style="left:123.7px;top:0.20px;font-size:9px;color:#ff1a1a;font-weight:normal;font-style:normal;font-family:'Liberation Mono', monospace;transform:scaleX(0.9922);">&quot;credi.txt&quot;</span><span id="t227" class="t" style="left:182.66px;top:0.20px;font-size:9px;color:#1a1ad0;font-weight:normal;font-style:normal;font-family:'Liberation Mono', monospace;transform:scaleX(0.9914);">,</span><span id="t228" class="t" style="left:43.3px;top:15.24px;font-size:9px;color:#8b14a6;font-weight:normal;font-style:normal;font-family:'Liberation Mono', monospace;transform:scaleX(0.9924);">&quot;activationUri&quot;</span><span id="t229" class="t" style="left:123.7px;top:15.24px;font-size:9px;color:#1a1ad0;font-weight:normal;font-style:normal;font-family:'Liberation Mono', monospace;transform:scaleX(0.9914);">:</span><span id="t230" class="t" style="left:129.06px;top:15.24px;font-size:9px;color:#111;font-weight:normal;font-style:normal;font-family:'Liberation Mono', monospace;transform:scaleX(0.9924);">&quot;ms-shellactivity:&quot;</span><span id="t231" class="t" style="left:43.3px;top:30.28px;font-size:9px;color:#1a1ad0;font-weight:normal;font-style:normal;font-family:'Liberation Mono', monospace;transform:scaleX(0.9914);">,</span><span id="t232" class="t" style="left:48.66px;top:30.28px;font-size:9px;color:#8b14a6;font-weight:normal;font-style:normal;font-family:'Liberation Mono', monospace;transform:scaleX(0.9923);">&quot;appDisplayName&quot;</span><span id="t233" class="t" style="left:134.42px;top:30.28px;font-size:9px;color:#1a1ad0;font-weight:normal;font-style:normal;font-family:'Liberation Mono', monospace;transform:scaleX(0.9914);">:</span><span id="t234" class="t" style="left:139.78px;top:30.28px;font-size:9px;color:#ff1a1a;font-weight:normal;font-style:normal;font-family:'Liberation Mono', monospace;transform:scaleX(0.9924);">&quot;Notepad&quot;</span><span id="t235" class="t" style="left:188.02px;top:30.28px;font-size:9px;color:#1a1ad0;font-weight:normal;font-style:normal;font-family:'Liberation Mono', monospace;transform:scaleX(0.9914);">,</span><span id="t236" class="t" style="left:43.3px;top:45.32px;font-size:9px;color:#8b14a6;font-weight:normal;font-style:normal;font-family:'Liberation Mono', monospace;transform:scaleX(0.9923);">&quot;description&quot;</span><span id="t237" class="t" style="left:112.98px;top:45.32px;font-size:9px;color:#1a1ad0;font-weight:normal;font-style:normal;font-family:'Liberation Mono', monospace;transform:scaleX(0.9914);">:</span><span id="t238" class="t" style="left:118.34px;top:45.32px;font-size:9px;color:#ff1a1a;font-weight:normal;font-style:normal;font-family:'Liberation Mono', monospace;transform:scaleX(0.9924);">&quot;C:</span><span id="t239" class="t" style="left:134.42px;top:45.32px;font-size:9px;color:#111;font-weight:normal;font-style:normal;font-family:'Liberation Mono', monospace;transform:scaleX(0.9914);">\\</span><span id="t240" class="t" style="left:145.14px;top:45.32px;font-size:9px;color:#ff1a1a;font-weight:normal;font-style:normal;font-family:'Liberation Mono', monospace;transform:scaleX(0.9920);">Users</span><span id="t241" class="t" style="left:171.94px;top:45.32px;font-size:9px;color:#111;font-weight:normal;font-style:normal;font-family:'Liberation Mono', monospace;transform:scaleX(0.9914);">\\</span><span id="t242" class="t" style="left:182.66px;top:45.32px;font-size:9px;color:#ff1a1a;font-weight:normal;font-style:normal;font-family:'Liberation Mono', monospace;transform:scaleX(0.9920);">Akaza</span><span id="t243" class="t" style="left:209.46px;top:45.32px;font-size:9px;color:#111;font-weight:normal;font-style:normal;font-family:'Liberation Mono', monospace;transform:scaleX(0.9914);">\\</span><span id="t244" class="t" style="left:43.3px;top:60.36px;font-size:9px;color:#ff1a1a;font-weight:normal;font-style:normal;font-family:'Liberation Mono', monospace;transform:scaleX(0.9923);">Desktop</span><span id="t245" class="t" style="left:80.82px;top:60.36px;font-size:9px;color:#111;font-weight:normal;font-style:normal;font-family:'Liberation Mono', monospace;transform:scaleX(0.9914);">\\</span><span id="t246" class="t" style="left:91.54px;top:60.36px;font-size:9px;color:#ff1a1a;font-weight:normal;font-style:normal;font-family:'Liberation Mono', monospace;transform:scaleX(0.9923);">credi.txt&quot;</span><span id="t247" class="t" style="left:145.14px;top:60.36px;font-size:9px;color:#1a1ad0;font-weight:normal;font-style:normal;font-family:'Liberation Mono', monospace;transform:scaleX(0.9914);">,</span><span id="t248" class="t" style="left:43.3px;top:75.40px;font-size:9px;color:#8b14a6;font-weight:normal;font-style:normal;font-family:'Liberation Mono', monospace;transform:scaleX(0.9923);">&quot;backgroundColor&quot;</span><span id="t249" class="t" style="left:134.42px;top:75.40px;font-size:9px;color:#1a1ad0;font-weight:normal;font-style:normal;font-family:'Liberation Mono', monospace;transform:scaleX(0.9914);">:</span><span id="t250" class="t" style="left:139.78px;top:75.40px;font-size:9px;color:#ff1a1a;font-weight:normal;font-style:normal;font-family:'Liberation Mono', monospace;transform:scaleX(0.9923);">&quot;black&quot;</span><span id="t251" class="t" style="left:177.3px;top:75.40px;font-size:9px;color:#1a1ad0;font-weight:normal;font-style:normal;font-family:'Liberation Mono', monospace;transform:scaleX(0.9914);">,</span><span id="t252" class="t" style="left:43.3px;top:90.44px;font-size:9px;color:#8b14a6;font-weight:normal;font-style:normal;font-family:'Liberation Mono', monospace;transform:scaleX(0.9924);">&quot;contentUri&quot;</span><span id="t253" class="t" style="left:107.62px;top:90.44px;font-size:9px;color:#1a1ad0;font-weight:normal;font-style:normal;font-family:'Liberation Mono', monospace;transform:scaleX(0.9914);">:</span><span id="t254" class="t" style="left:43.3px;top:105.48px;font-size:9px;color:#ff1a1a;font-weight:normal;font-style:normal;font-family:'Liberation Mono', monospace;transform:scaleX(0.9924);">&quot;file:///C:/Users/Akaza/Desktop/cred</span></div></div>
</body></html>
